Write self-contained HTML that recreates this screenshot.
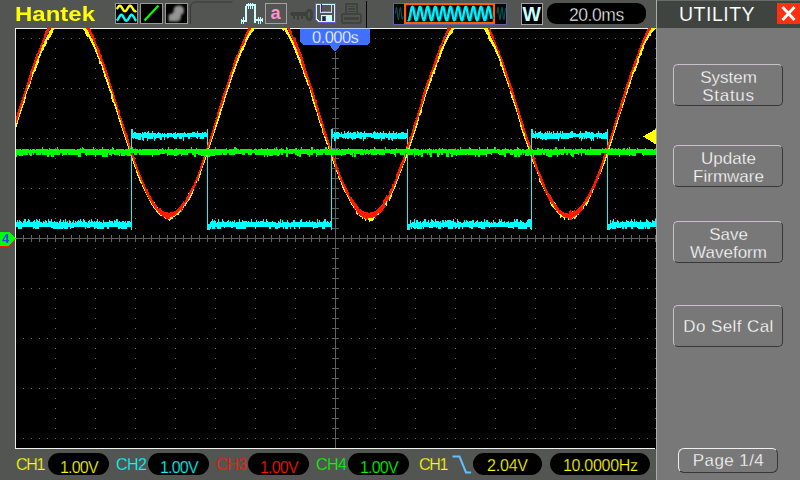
<!DOCTYPE html>
<html lang="en"><head><meta charset="utf-8"><title>Hantek UTILITY</title>
<style>
html,body{margin:0;padding:0;}
body{width:800px;height:480px;overflow:hidden;background:#535552;position:relative;font-family:"Liberation Sans",sans-serif;}
#scr{position:absolute;left:0;top:0;width:800px;height:480px;}
.t{position:absolute;white-space:nowrap;line-height:1;}
.ch{-webkit-text-stroke:0.25px #535552;}
.pv{-webkit-text-stroke:0.25px #000;}
.pill{position:absolute;background:#000;border-radius:11px;height:22px;top:453px;}
.btn{position:absolute;left:673px;width:108px;height:40px;border:1px solid;border-color:#c8c0c8 #383838 #383838 #c8c0c8;border-radius:5px;background:#787878;}
.bt{-webkit-text-stroke:0.3px #787878;position:absolute;left:657px;width:143px;text-align:center;color:#fff;font-size:17px;line-height:18px;white-space:nowrap;}
</style></head><body>
<svg id="scr" width="800" height="480" viewBox="0 0 800 480" shape-rendering="crispEdges">
<defs><filter id="bl" x="-20%" y="-20%" width="140%" height="140%"><feGaussianBlur stdDeviation="0.9"/></filter></defs>
<!-- side panel -->
<rect x="656" y="0" width="1" height="480" fill="#b0a8b0"/>
<rect x="657" y="0" width="143" height="480" fill="#787878"/>
<rect x="657" y="0" width="143" height="28" fill="#404440"/>
<rect x="657" y="0" width="143" height="1" fill="#686c68"/>
<!-- plot -->
<rect x="15" y="28" width="641" height="421" fill="#000"/>
<path d="M23 38h1v1h-1zM23 88h1v1h-1zM23 138h1v1h-1zM23 188h1v1h-1zM23 288h1v1h-1zM23 338h1v1h-1zM23 388h1v1h-1zM23 438h1v1h-1zM31 38h1v1h-1zM31 88h1v1h-1zM31 138h1v1h-1zM31 188h1v1h-1zM31 288h1v1h-1zM31 338h1v1h-1zM31 388h1v1h-1zM31 438h1v1h-1zM39 38h1v1h-1zM39 88h1v1h-1zM39 138h1v1h-1zM39 188h1v1h-1zM39 288h1v1h-1zM39 338h1v1h-1zM39 388h1v1h-1zM39 438h1v1h-1zM47 38h1v1h-1zM47 88h1v1h-1zM47 138h1v1h-1zM47 188h1v1h-1zM47 288h1v1h-1zM47 338h1v1h-1zM47 388h1v1h-1zM47 438h1v1h-1zM55 38h1v1h-1zM55 48h1v1h-1zM55 58h1v1h-1zM55 68h1v1h-1zM55 78h1v1h-1zM55 88h1v1h-1zM55 98h1v1h-1zM55 108h1v1h-1zM55 118h1v1h-1zM55 128h1v1h-1zM55 138h1v1h-1zM55 148h1v1h-1zM55 158h1v1h-1zM55 168h1v1h-1zM55 178h1v1h-1zM55 188h1v1h-1zM55 198h1v1h-1zM55 208h1v1h-1zM55 218h1v1h-1zM55 228h1v1h-1zM55 238h1v1h-1zM55 248h1v1h-1zM55 258h1v1h-1zM55 268h1v1h-1zM55 278h1v1h-1zM55 288h1v1h-1zM55 298h1v1h-1zM55 308h1v1h-1zM55 318h1v1h-1zM55 328h1v1h-1zM55 338h1v1h-1zM55 348h1v1h-1zM55 358h1v1h-1zM55 368h1v1h-1zM55 378h1v1h-1zM55 388h1v1h-1zM55 398h1v1h-1zM55 408h1v1h-1zM55 418h1v1h-1zM55 428h1v1h-1zM55 438h1v1h-1zM63 38h1v1h-1zM63 88h1v1h-1zM63 138h1v1h-1zM63 188h1v1h-1zM63 288h1v1h-1zM63 338h1v1h-1zM63 388h1v1h-1zM63 438h1v1h-1zM71 38h1v1h-1zM71 88h1v1h-1zM71 138h1v1h-1zM71 188h1v1h-1zM71 288h1v1h-1zM71 338h1v1h-1zM71 388h1v1h-1zM71 438h1v1h-1zM79 38h1v1h-1zM79 88h1v1h-1zM79 138h1v1h-1zM79 188h1v1h-1zM79 288h1v1h-1zM79 338h1v1h-1zM79 388h1v1h-1zM79 438h1v1h-1zM87 38h1v1h-1zM87 88h1v1h-1zM87 138h1v1h-1zM87 188h1v1h-1zM87 288h1v1h-1zM87 338h1v1h-1zM87 388h1v1h-1zM87 438h1v1h-1zM95 38h1v1h-1zM95 48h1v1h-1zM95 58h1v1h-1zM95 68h1v1h-1zM95 78h1v1h-1zM95 88h1v1h-1zM95 98h1v1h-1zM95 108h1v1h-1zM95 118h1v1h-1zM95 128h1v1h-1zM95 138h1v1h-1zM95 148h1v1h-1zM95 158h1v1h-1zM95 168h1v1h-1zM95 178h1v1h-1zM95 188h1v1h-1zM95 198h1v1h-1zM95 208h1v1h-1zM95 218h1v1h-1zM95 228h1v1h-1zM95 238h1v1h-1zM95 248h1v1h-1zM95 258h1v1h-1zM95 268h1v1h-1zM95 278h1v1h-1zM95 288h1v1h-1zM95 298h1v1h-1zM95 308h1v1h-1zM95 318h1v1h-1zM95 328h1v1h-1zM95 338h1v1h-1zM95 348h1v1h-1zM95 358h1v1h-1zM95 368h1v1h-1zM95 378h1v1h-1zM95 388h1v1h-1zM95 398h1v1h-1zM95 408h1v1h-1zM95 418h1v1h-1zM95 428h1v1h-1zM95 438h1v1h-1zM103 38h1v1h-1zM103 88h1v1h-1zM103 138h1v1h-1zM103 188h1v1h-1zM103 288h1v1h-1zM103 338h1v1h-1zM103 388h1v1h-1zM103 438h1v1h-1zM111 38h1v1h-1zM111 88h1v1h-1zM111 138h1v1h-1zM111 188h1v1h-1zM111 288h1v1h-1zM111 338h1v1h-1zM111 388h1v1h-1zM111 438h1v1h-1zM119 38h1v1h-1zM119 88h1v1h-1zM119 138h1v1h-1zM119 188h1v1h-1zM119 288h1v1h-1zM119 338h1v1h-1zM119 388h1v1h-1zM119 438h1v1h-1zM127 38h1v1h-1zM127 88h1v1h-1zM127 138h1v1h-1zM127 188h1v1h-1zM127 288h1v1h-1zM127 338h1v1h-1zM127 388h1v1h-1zM127 438h1v1h-1zM135 38h1v1h-1zM135 48h1v1h-1zM135 58h1v1h-1zM135 68h1v1h-1zM135 78h1v1h-1zM135 88h1v1h-1zM135 98h1v1h-1zM135 108h1v1h-1zM135 118h1v1h-1zM135 128h1v1h-1zM135 138h1v1h-1zM135 148h1v1h-1zM135 158h1v1h-1zM135 168h1v1h-1zM135 178h1v1h-1zM135 188h1v1h-1zM135 198h1v1h-1zM135 208h1v1h-1zM135 218h1v1h-1zM135 228h1v1h-1zM135 238h1v1h-1zM135 248h1v1h-1zM135 258h1v1h-1zM135 268h1v1h-1zM135 278h1v1h-1zM135 288h1v1h-1zM135 298h1v1h-1zM135 308h1v1h-1zM135 318h1v1h-1zM135 328h1v1h-1zM135 338h1v1h-1zM135 348h1v1h-1zM135 358h1v1h-1zM135 368h1v1h-1zM135 378h1v1h-1zM135 388h1v1h-1zM135 398h1v1h-1zM135 408h1v1h-1zM135 418h1v1h-1zM135 428h1v1h-1zM135 438h1v1h-1zM143 38h1v1h-1zM143 88h1v1h-1zM143 138h1v1h-1zM143 188h1v1h-1zM143 288h1v1h-1zM143 338h1v1h-1zM143 388h1v1h-1zM143 438h1v1h-1zM151 38h1v1h-1zM151 88h1v1h-1zM151 138h1v1h-1zM151 188h1v1h-1zM151 288h1v1h-1zM151 338h1v1h-1zM151 388h1v1h-1zM151 438h1v1h-1zM159 38h1v1h-1zM159 88h1v1h-1zM159 138h1v1h-1zM159 188h1v1h-1zM159 288h1v1h-1zM159 338h1v1h-1zM159 388h1v1h-1zM159 438h1v1h-1zM167 38h1v1h-1zM167 88h1v1h-1zM167 138h1v1h-1zM167 188h1v1h-1zM167 288h1v1h-1zM167 338h1v1h-1zM167 388h1v1h-1zM167 438h1v1h-1zM175 38h1v1h-1zM175 48h1v1h-1zM175 58h1v1h-1zM175 68h1v1h-1zM175 78h1v1h-1zM175 88h1v1h-1zM175 98h1v1h-1zM175 108h1v1h-1zM175 118h1v1h-1zM175 128h1v1h-1zM175 138h1v1h-1zM175 148h1v1h-1zM175 158h1v1h-1zM175 168h1v1h-1zM175 178h1v1h-1zM175 188h1v1h-1zM175 198h1v1h-1zM175 208h1v1h-1zM175 218h1v1h-1zM175 228h1v1h-1zM175 238h1v1h-1zM175 248h1v1h-1zM175 258h1v1h-1zM175 268h1v1h-1zM175 278h1v1h-1zM175 288h1v1h-1zM175 298h1v1h-1zM175 308h1v1h-1zM175 318h1v1h-1zM175 328h1v1h-1zM175 338h1v1h-1zM175 348h1v1h-1zM175 358h1v1h-1zM175 368h1v1h-1zM175 378h1v1h-1zM175 388h1v1h-1zM175 398h1v1h-1zM175 408h1v1h-1zM175 418h1v1h-1zM175 428h1v1h-1zM175 438h1v1h-1zM183 38h1v1h-1zM183 88h1v1h-1zM183 138h1v1h-1zM183 188h1v1h-1zM183 288h1v1h-1zM183 338h1v1h-1zM183 388h1v1h-1zM183 438h1v1h-1zM191 38h1v1h-1zM191 88h1v1h-1zM191 138h1v1h-1zM191 188h1v1h-1zM191 288h1v1h-1zM191 338h1v1h-1zM191 388h1v1h-1zM191 438h1v1h-1zM199 38h1v1h-1zM199 88h1v1h-1zM199 138h1v1h-1zM199 188h1v1h-1zM199 288h1v1h-1zM199 338h1v1h-1zM199 388h1v1h-1zM199 438h1v1h-1zM207 38h1v1h-1zM207 88h1v1h-1zM207 138h1v1h-1zM207 188h1v1h-1zM207 288h1v1h-1zM207 338h1v1h-1zM207 388h1v1h-1zM207 438h1v1h-1zM215 38h1v1h-1zM215 48h1v1h-1zM215 58h1v1h-1zM215 68h1v1h-1zM215 78h1v1h-1zM215 88h1v1h-1zM215 98h1v1h-1zM215 108h1v1h-1zM215 118h1v1h-1zM215 128h1v1h-1zM215 138h1v1h-1zM215 148h1v1h-1zM215 158h1v1h-1zM215 168h1v1h-1zM215 178h1v1h-1zM215 188h1v1h-1zM215 198h1v1h-1zM215 208h1v1h-1zM215 218h1v1h-1zM215 228h1v1h-1zM215 238h1v1h-1zM215 248h1v1h-1zM215 258h1v1h-1zM215 268h1v1h-1zM215 278h1v1h-1zM215 288h1v1h-1zM215 298h1v1h-1zM215 308h1v1h-1zM215 318h1v1h-1zM215 328h1v1h-1zM215 338h1v1h-1zM215 348h1v1h-1zM215 358h1v1h-1zM215 368h1v1h-1zM215 378h1v1h-1zM215 388h1v1h-1zM215 398h1v1h-1zM215 408h1v1h-1zM215 418h1v1h-1zM215 428h1v1h-1zM215 438h1v1h-1zM223 38h1v1h-1zM223 88h1v1h-1zM223 138h1v1h-1zM223 188h1v1h-1zM223 288h1v1h-1zM223 338h1v1h-1zM223 388h1v1h-1zM223 438h1v1h-1zM231 38h1v1h-1zM231 88h1v1h-1zM231 138h1v1h-1zM231 188h1v1h-1zM231 288h1v1h-1zM231 338h1v1h-1zM231 388h1v1h-1zM231 438h1v1h-1zM239 38h1v1h-1zM239 88h1v1h-1zM239 138h1v1h-1zM239 188h1v1h-1zM239 288h1v1h-1zM239 338h1v1h-1zM239 388h1v1h-1zM239 438h1v1h-1zM247 38h1v1h-1zM247 88h1v1h-1zM247 138h1v1h-1zM247 188h1v1h-1zM247 288h1v1h-1zM247 338h1v1h-1zM247 388h1v1h-1zM247 438h1v1h-1zM255 38h1v1h-1zM255 48h1v1h-1zM255 58h1v1h-1zM255 68h1v1h-1zM255 78h1v1h-1zM255 88h1v1h-1zM255 98h1v1h-1zM255 108h1v1h-1zM255 118h1v1h-1zM255 128h1v1h-1zM255 138h1v1h-1zM255 148h1v1h-1zM255 158h1v1h-1zM255 168h1v1h-1zM255 178h1v1h-1zM255 188h1v1h-1zM255 198h1v1h-1zM255 208h1v1h-1zM255 218h1v1h-1zM255 228h1v1h-1zM255 238h1v1h-1zM255 248h1v1h-1zM255 258h1v1h-1zM255 268h1v1h-1zM255 278h1v1h-1zM255 288h1v1h-1zM255 298h1v1h-1zM255 308h1v1h-1zM255 318h1v1h-1zM255 328h1v1h-1zM255 338h1v1h-1zM255 348h1v1h-1zM255 358h1v1h-1zM255 368h1v1h-1zM255 378h1v1h-1zM255 388h1v1h-1zM255 398h1v1h-1zM255 408h1v1h-1zM255 418h1v1h-1zM255 428h1v1h-1zM255 438h1v1h-1zM263 38h1v1h-1zM263 88h1v1h-1zM263 138h1v1h-1zM263 188h1v1h-1zM263 288h1v1h-1zM263 338h1v1h-1zM263 388h1v1h-1zM263 438h1v1h-1zM271 38h1v1h-1zM271 88h1v1h-1zM271 138h1v1h-1zM271 188h1v1h-1zM271 288h1v1h-1zM271 338h1v1h-1zM271 388h1v1h-1zM271 438h1v1h-1zM279 38h1v1h-1zM279 88h1v1h-1zM279 138h1v1h-1zM279 188h1v1h-1zM279 288h1v1h-1zM279 338h1v1h-1zM279 388h1v1h-1zM279 438h1v1h-1zM287 38h1v1h-1zM287 88h1v1h-1zM287 138h1v1h-1zM287 188h1v1h-1zM287 288h1v1h-1zM287 338h1v1h-1zM287 388h1v1h-1zM287 438h1v1h-1zM295 38h1v1h-1zM295 48h1v1h-1zM295 58h1v1h-1zM295 68h1v1h-1zM295 78h1v1h-1zM295 88h1v1h-1zM295 98h1v1h-1zM295 108h1v1h-1zM295 118h1v1h-1zM295 128h1v1h-1zM295 138h1v1h-1zM295 148h1v1h-1zM295 158h1v1h-1zM295 168h1v1h-1zM295 178h1v1h-1zM295 188h1v1h-1zM295 198h1v1h-1zM295 208h1v1h-1zM295 218h1v1h-1zM295 228h1v1h-1zM295 238h1v1h-1zM295 248h1v1h-1zM295 258h1v1h-1zM295 268h1v1h-1zM295 278h1v1h-1zM295 288h1v1h-1zM295 298h1v1h-1zM295 308h1v1h-1zM295 318h1v1h-1zM295 328h1v1h-1zM295 338h1v1h-1zM295 348h1v1h-1zM295 358h1v1h-1zM295 368h1v1h-1zM295 378h1v1h-1zM295 388h1v1h-1zM295 398h1v1h-1zM295 408h1v1h-1zM295 418h1v1h-1zM295 428h1v1h-1zM295 438h1v1h-1zM303 38h1v1h-1zM303 88h1v1h-1zM303 138h1v1h-1zM303 188h1v1h-1zM303 288h1v1h-1zM303 338h1v1h-1zM303 388h1v1h-1zM303 438h1v1h-1zM311 38h1v1h-1zM311 88h1v1h-1zM311 138h1v1h-1zM311 188h1v1h-1zM311 288h1v1h-1zM311 338h1v1h-1zM311 388h1v1h-1zM311 438h1v1h-1zM319 38h1v1h-1zM319 88h1v1h-1zM319 138h1v1h-1zM319 188h1v1h-1zM319 288h1v1h-1zM319 338h1v1h-1zM319 388h1v1h-1zM319 438h1v1h-1zM327 38h1v1h-1zM327 88h1v1h-1zM327 138h1v1h-1zM327 188h1v1h-1zM327 288h1v1h-1zM327 338h1v1h-1zM327 388h1v1h-1zM327 438h1v1h-1zM335 38h1v1h-1zM335 88h1v1h-1zM335 138h1v1h-1zM335 188h1v1h-1zM335 288h1v1h-1zM335 338h1v1h-1zM335 388h1v1h-1zM335 438h1v1h-1zM343 38h1v1h-1zM343 88h1v1h-1zM343 138h1v1h-1zM343 188h1v1h-1zM343 288h1v1h-1zM343 338h1v1h-1zM343 388h1v1h-1zM343 438h1v1h-1zM351 38h1v1h-1zM351 88h1v1h-1zM351 138h1v1h-1zM351 188h1v1h-1zM351 288h1v1h-1zM351 338h1v1h-1zM351 388h1v1h-1zM351 438h1v1h-1zM359 38h1v1h-1zM359 88h1v1h-1zM359 138h1v1h-1zM359 188h1v1h-1zM359 288h1v1h-1zM359 338h1v1h-1zM359 388h1v1h-1zM359 438h1v1h-1zM367 38h1v1h-1zM367 88h1v1h-1zM367 138h1v1h-1zM367 188h1v1h-1zM367 288h1v1h-1zM367 338h1v1h-1zM367 388h1v1h-1zM367 438h1v1h-1zM375 38h1v1h-1zM375 48h1v1h-1zM375 58h1v1h-1zM375 68h1v1h-1zM375 78h1v1h-1zM375 88h1v1h-1zM375 98h1v1h-1zM375 108h1v1h-1zM375 118h1v1h-1zM375 128h1v1h-1zM375 138h1v1h-1zM375 148h1v1h-1zM375 158h1v1h-1zM375 168h1v1h-1zM375 178h1v1h-1zM375 188h1v1h-1zM375 198h1v1h-1zM375 208h1v1h-1zM375 218h1v1h-1zM375 228h1v1h-1zM375 238h1v1h-1zM375 248h1v1h-1zM375 258h1v1h-1zM375 268h1v1h-1zM375 278h1v1h-1zM375 288h1v1h-1zM375 298h1v1h-1zM375 308h1v1h-1zM375 318h1v1h-1zM375 328h1v1h-1zM375 338h1v1h-1zM375 348h1v1h-1zM375 358h1v1h-1zM375 368h1v1h-1zM375 378h1v1h-1zM375 388h1v1h-1zM375 398h1v1h-1zM375 408h1v1h-1zM375 418h1v1h-1zM375 428h1v1h-1zM375 438h1v1h-1zM383 38h1v1h-1zM383 88h1v1h-1zM383 138h1v1h-1zM383 188h1v1h-1zM383 288h1v1h-1zM383 338h1v1h-1zM383 388h1v1h-1zM383 438h1v1h-1zM391 38h1v1h-1zM391 88h1v1h-1zM391 138h1v1h-1zM391 188h1v1h-1zM391 288h1v1h-1zM391 338h1v1h-1zM391 388h1v1h-1zM391 438h1v1h-1zM399 38h1v1h-1zM399 88h1v1h-1zM399 138h1v1h-1zM399 188h1v1h-1zM399 288h1v1h-1zM399 338h1v1h-1zM399 388h1v1h-1zM399 438h1v1h-1zM407 38h1v1h-1zM407 88h1v1h-1zM407 138h1v1h-1zM407 188h1v1h-1zM407 288h1v1h-1zM407 338h1v1h-1zM407 388h1v1h-1zM407 438h1v1h-1zM415 38h1v1h-1zM415 48h1v1h-1zM415 58h1v1h-1zM415 68h1v1h-1zM415 78h1v1h-1zM415 88h1v1h-1zM415 98h1v1h-1zM415 108h1v1h-1zM415 118h1v1h-1zM415 128h1v1h-1zM415 138h1v1h-1zM415 148h1v1h-1zM415 158h1v1h-1zM415 168h1v1h-1zM415 178h1v1h-1zM415 188h1v1h-1zM415 198h1v1h-1zM415 208h1v1h-1zM415 218h1v1h-1zM415 228h1v1h-1zM415 238h1v1h-1zM415 248h1v1h-1zM415 258h1v1h-1zM415 268h1v1h-1zM415 278h1v1h-1zM415 288h1v1h-1zM415 298h1v1h-1zM415 308h1v1h-1zM415 318h1v1h-1zM415 328h1v1h-1zM415 338h1v1h-1zM415 348h1v1h-1zM415 358h1v1h-1zM415 368h1v1h-1zM415 378h1v1h-1zM415 388h1v1h-1zM415 398h1v1h-1zM415 408h1v1h-1zM415 418h1v1h-1zM415 428h1v1h-1zM415 438h1v1h-1zM423 38h1v1h-1zM423 88h1v1h-1zM423 138h1v1h-1zM423 188h1v1h-1zM423 288h1v1h-1zM423 338h1v1h-1zM423 388h1v1h-1zM423 438h1v1h-1zM431 38h1v1h-1zM431 88h1v1h-1zM431 138h1v1h-1zM431 188h1v1h-1zM431 288h1v1h-1zM431 338h1v1h-1zM431 388h1v1h-1zM431 438h1v1h-1zM439 38h1v1h-1zM439 88h1v1h-1zM439 138h1v1h-1zM439 188h1v1h-1zM439 288h1v1h-1zM439 338h1v1h-1zM439 388h1v1h-1zM439 438h1v1h-1zM447 38h1v1h-1zM447 88h1v1h-1zM447 138h1v1h-1zM447 188h1v1h-1zM447 288h1v1h-1zM447 338h1v1h-1zM447 388h1v1h-1zM447 438h1v1h-1zM455 38h1v1h-1zM455 48h1v1h-1zM455 58h1v1h-1zM455 68h1v1h-1zM455 78h1v1h-1zM455 88h1v1h-1zM455 98h1v1h-1zM455 108h1v1h-1zM455 118h1v1h-1zM455 128h1v1h-1zM455 138h1v1h-1zM455 148h1v1h-1zM455 158h1v1h-1zM455 168h1v1h-1zM455 178h1v1h-1zM455 188h1v1h-1zM455 198h1v1h-1zM455 208h1v1h-1zM455 218h1v1h-1zM455 228h1v1h-1zM455 238h1v1h-1zM455 248h1v1h-1zM455 258h1v1h-1zM455 268h1v1h-1zM455 278h1v1h-1zM455 288h1v1h-1zM455 298h1v1h-1zM455 308h1v1h-1zM455 318h1v1h-1zM455 328h1v1h-1zM455 338h1v1h-1zM455 348h1v1h-1zM455 358h1v1h-1zM455 368h1v1h-1zM455 378h1v1h-1zM455 388h1v1h-1zM455 398h1v1h-1zM455 408h1v1h-1zM455 418h1v1h-1zM455 428h1v1h-1zM455 438h1v1h-1zM463 38h1v1h-1zM463 88h1v1h-1zM463 138h1v1h-1zM463 188h1v1h-1zM463 288h1v1h-1zM463 338h1v1h-1zM463 388h1v1h-1zM463 438h1v1h-1zM471 38h1v1h-1zM471 88h1v1h-1zM471 138h1v1h-1zM471 188h1v1h-1zM471 288h1v1h-1zM471 338h1v1h-1zM471 388h1v1h-1zM471 438h1v1h-1zM479 38h1v1h-1zM479 88h1v1h-1zM479 138h1v1h-1zM479 188h1v1h-1zM479 288h1v1h-1zM479 338h1v1h-1zM479 388h1v1h-1zM479 438h1v1h-1zM487 38h1v1h-1zM487 88h1v1h-1zM487 138h1v1h-1zM487 188h1v1h-1zM487 288h1v1h-1zM487 338h1v1h-1zM487 388h1v1h-1zM487 438h1v1h-1zM495 38h1v1h-1zM495 48h1v1h-1zM495 58h1v1h-1zM495 68h1v1h-1zM495 78h1v1h-1zM495 88h1v1h-1zM495 98h1v1h-1zM495 108h1v1h-1zM495 118h1v1h-1zM495 128h1v1h-1zM495 138h1v1h-1zM495 148h1v1h-1zM495 158h1v1h-1zM495 168h1v1h-1zM495 178h1v1h-1zM495 188h1v1h-1zM495 198h1v1h-1zM495 208h1v1h-1zM495 218h1v1h-1zM495 228h1v1h-1zM495 238h1v1h-1zM495 248h1v1h-1zM495 258h1v1h-1zM495 268h1v1h-1zM495 278h1v1h-1zM495 288h1v1h-1zM495 298h1v1h-1zM495 308h1v1h-1zM495 318h1v1h-1zM495 328h1v1h-1zM495 338h1v1h-1zM495 348h1v1h-1zM495 358h1v1h-1zM495 368h1v1h-1zM495 378h1v1h-1zM495 388h1v1h-1zM495 398h1v1h-1zM495 408h1v1h-1zM495 418h1v1h-1zM495 428h1v1h-1zM495 438h1v1h-1zM503 38h1v1h-1zM503 88h1v1h-1zM503 138h1v1h-1zM503 188h1v1h-1zM503 288h1v1h-1zM503 338h1v1h-1zM503 388h1v1h-1zM503 438h1v1h-1zM511 38h1v1h-1zM511 88h1v1h-1zM511 138h1v1h-1zM511 188h1v1h-1zM511 288h1v1h-1zM511 338h1v1h-1zM511 388h1v1h-1zM511 438h1v1h-1zM519 38h1v1h-1zM519 88h1v1h-1zM519 138h1v1h-1zM519 188h1v1h-1zM519 288h1v1h-1zM519 338h1v1h-1zM519 388h1v1h-1zM519 438h1v1h-1zM527 38h1v1h-1zM527 88h1v1h-1zM527 138h1v1h-1zM527 188h1v1h-1zM527 288h1v1h-1zM527 338h1v1h-1zM527 388h1v1h-1zM527 438h1v1h-1zM535 38h1v1h-1zM535 48h1v1h-1zM535 58h1v1h-1zM535 68h1v1h-1zM535 78h1v1h-1zM535 88h1v1h-1zM535 98h1v1h-1zM535 108h1v1h-1zM535 118h1v1h-1zM535 128h1v1h-1zM535 138h1v1h-1zM535 148h1v1h-1zM535 158h1v1h-1zM535 168h1v1h-1zM535 178h1v1h-1zM535 188h1v1h-1zM535 198h1v1h-1zM535 208h1v1h-1zM535 218h1v1h-1zM535 228h1v1h-1zM535 238h1v1h-1zM535 248h1v1h-1zM535 258h1v1h-1zM535 268h1v1h-1zM535 278h1v1h-1zM535 288h1v1h-1zM535 298h1v1h-1zM535 308h1v1h-1zM535 318h1v1h-1zM535 328h1v1h-1zM535 338h1v1h-1zM535 348h1v1h-1zM535 358h1v1h-1zM535 368h1v1h-1zM535 378h1v1h-1zM535 388h1v1h-1zM535 398h1v1h-1zM535 408h1v1h-1zM535 418h1v1h-1zM535 428h1v1h-1zM535 438h1v1h-1zM543 38h1v1h-1zM543 88h1v1h-1zM543 138h1v1h-1zM543 188h1v1h-1zM543 288h1v1h-1zM543 338h1v1h-1zM543 388h1v1h-1zM543 438h1v1h-1zM551 38h1v1h-1zM551 88h1v1h-1zM551 138h1v1h-1zM551 188h1v1h-1zM551 288h1v1h-1zM551 338h1v1h-1zM551 388h1v1h-1zM551 438h1v1h-1zM559 38h1v1h-1zM559 88h1v1h-1zM559 138h1v1h-1zM559 188h1v1h-1zM559 288h1v1h-1zM559 338h1v1h-1zM559 388h1v1h-1zM559 438h1v1h-1zM567 38h1v1h-1zM567 88h1v1h-1zM567 138h1v1h-1zM567 188h1v1h-1zM567 288h1v1h-1zM567 338h1v1h-1zM567 388h1v1h-1zM567 438h1v1h-1zM575 38h1v1h-1zM575 48h1v1h-1zM575 58h1v1h-1zM575 68h1v1h-1zM575 78h1v1h-1zM575 88h1v1h-1zM575 98h1v1h-1zM575 108h1v1h-1zM575 118h1v1h-1zM575 128h1v1h-1zM575 138h1v1h-1zM575 148h1v1h-1zM575 158h1v1h-1zM575 168h1v1h-1zM575 178h1v1h-1zM575 188h1v1h-1zM575 198h1v1h-1zM575 208h1v1h-1zM575 218h1v1h-1zM575 228h1v1h-1zM575 238h1v1h-1zM575 248h1v1h-1zM575 258h1v1h-1zM575 268h1v1h-1zM575 278h1v1h-1zM575 288h1v1h-1zM575 298h1v1h-1zM575 308h1v1h-1zM575 318h1v1h-1zM575 328h1v1h-1zM575 338h1v1h-1zM575 348h1v1h-1zM575 358h1v1h-1zM575 368h1v1h-1zM575 378h1v1h-1zM575 388h1v1h-1zM575 398h1v1h-1zM575 408h1v1h-1zM575 418h1v1h-1zM575 428h1v1h-1zM575 438h1v1h-1zM583 38h1v1h-1zM583 88h1v1h-1zM583 138h1v1h-1zM583 188h1v1h-1zM583 288h1v1h-1zM583 338h1v1h-1zM583 388h1v1h-1zM583 438h1v1h-1zM591 38h1v1h-1zM591 88h1v1h-1zM591 138h1v1h-1zM591 188h1v1h-1zM591 288h1v1h-1zM591 338h1v1h-1zM591 388h1v1h-1zM591 438h1v1h-1zM599 38h1v1h-1zM599 88h1v1h-1zM599 138h1v1h-1zM599 188h1v1h-1zM599 288h1v1h-1zM599 338h1v1h-1zM599 388h1v1h-1zM599 438h1v1h-1zM607 38h1v1h-1zM607 88h1v1h-1zM607 138h1v1h-1zM607 188h1v1h-1zM607 288h1v1h-1zM607 338h1v1h-1zM607 388h1v1h-1zM607 438h1v1h-1zM615 38h1v1h-1zM615 48h1v1h-1zM615 58h1v1h-1zM615 68h1v1h-1zM615 78h1v1h-1zM615 88h1v1h-1zM615 98h1v1h-1zM615 108h1v1h-1zM615 118h1v1h-1zM615 128h1v1h-1zM615 138h1v1h-1zM615 148h1v1h-1zM615 158h1v1h-1zM615 168h1v1h-1zM615 178h1v1h-1zM615 188h1v1h-1zM615 198h1v1h-1zM615 208h1v1h-1zM615 218h1v1h-1zM615 228h1v1h-1zM615 238h1v1h-1zM615 248h1v1h-1zM615 258h1v1h-1zM615 268h1v1h-1zM615 278h1v1h-1zM615 288h1v1h-1zM615 298h1v1h-1zM615 308h1v1h-1zM615 318h1v1h-1zM615 328h1v1h-1zM615 338h1v1h-1zM615 348h1v1h-1zM615 358h1v1h-1zM615 368h1v1h-1zM615 378h1v1h-1zM615 388h1v1h-1zM615 398h1v1h-1zM615 408h1v1h-1zM615 418h1v1h-1zM615 428h1v1h-1zM615 438h1v1h-1zM623 38h1v1h-1zM623 88h1v1h-1zM623 138h1v1h-1zM623 188h1v1h-1zM623 288h1v1h-1zM623 338h1v1h-1zM623 388h1v1h-1zM623 438h1v1h-1zM631 38h1v1h-1zM631 88h1v1h-1zM631 138h1v1h-1zM631 188h1v1h-1zM631 288h1v1h-1zM631 338h1v1h-1zM631 388h1v1h-1zM631 438h1v1h-1zM639 38h1v1h-1zM639 88h1v1h-1zM639 138h1v1h-1zM639 188h1v1h-1zM639 288h1v1h-1zM639 338h1v1h-1zM639 388h1v1h-1zM639 438h1v1h-1zM647 38h1v1h-1zM647 88h1v1h-1zM647 138h1v1h-1zM647 188h1v1h-1zM647 288h1v1h-1zM647 338h1v1h-1zM647 388h1v1h-1zM647 438h1v1h-1zM655 38h1v1h-1zM655 48h1v1h-1zM655 58h1v1h-1zM655 68h1v1h-1zM655 78h1v1h-1zM655 88h1v1h-1zM655 98h1v1h-1zM655 108h1v1h-1zM655 118h1v1h-1zM655 128h1v1h-1zM655 138h1v1h-1zM655 148h1v1h-1zM655 158h1v1h-1zM655 168h1v1h-1zM655 178h1v1h-1zM655 188h1v1h-1zM655 198h1v1h-1zM655 208h1v1h-1zM655 218h1v1h-1zM655 228h1v1h-1zM655 238h1v1h-1zM655 248h1v1h-1zM655 258h1v1h-1zM655 268h1v1h-1zM655 278h1v1h-1zM655 288h1v1h-1zM655 298h1v1h-1zM655 308h1v1h-1zM655 318h1v1h-1zM655 328h1v1h-1zM655 338h1v1h-1zM655 348h1v1h-1zM655 358h1v1h-1zM655 368h1v1h-1zM655 378h1v1h-1zM655 388h1v1h-1zM655 398h1v1h-1zM655 408h1v1h-1zM655 418h1v1h-1zM655 428h1v1h-1zM655 438h1v1h-1z" fill="#6c6c6c"/>
<path d="M16 238h640v1h-640zM23 235h1v7h-1zM31 235h1v7h-1zM39 235h1v7h-1zM47 235h1v7h-1zM55 235h1v7h-1zM63 235h1v7h-1zM71 235h1v7h-1zM79 235h1v7h-1zM87 235h1v7h-1zM95 235h1v7h-1zM103 235h1v7h-1zM111 235h1v7h-1zM119 235h1v7h-1zM127 235h1v7h-1zM135 235h1v7h-1zM143 235h1v7h-1zM151 235h1v7h-1zM159 235h1v7h-1zM167 235h1v7h-1zM175 235h1v7h-1zM183 235h1v7h-1zM191 235h1v7h-1zM199 235h1v7h-1zM207 235h1v7h-1zM215 235h1v7h-1zM223 235h1v7h-1zM231 235h1v7h-1zM239 235h1v7h-1zM247 235h1v7h-1zM255 235h1v7h-1zM263 235h1v7h-1zM271 235h1v7h-1zM279 235h1v7h-1zM287 235h1v7h-1zM295 235h1v7h-1zM303 235h1v7h-1zM311 235h1v7h-1zM319 235h1v7h-1zM327 235h1v7h-1zM335 235h1v7h-1zM343 235h1v7h-1zM351 235h1v7h-1zM359 235h1v7h-1zM367 235h1v7h-1zM375 235h1v7h-1zM383 235h1v7h-1zM391 235h1v7h-1zM399 235h1v7h-1zM407 235h1v7h-1zM415 235h1v7h-1zM423 235h1v7h-1zM431 235h1v7h-1zM439 235h1v7h-1zM447 235h1v7h-1zM455 235h1v7h-1zM463 235h1v7h-1zM471 235h1v7h-1zM479 235h1v7h-1zM487 235h1v7h-1zM495 235h1v7h-1zM503 235h1v7h-1zM511 235h1v7h-1zM519 235h1v7h-1zM527 235h1v7h-1zM535 235h1v7h-1zM543 235h1v7h-1zM551 235h1v7h-1zM559 235h1v7h-1zM567 235h1v7h-1zM575 235h1v7h-1zM583 235h1v7h-1zM591 235h1v7h-1zM599 235h1v7h-1zM607 235h1v7h-1zM615 235h1v7h-1zM623 235h1v7h-1zM631 235h1v7h-1zM639 235h1v7h-1zM647 235h1v7h-1zM655 235h1v7h-1zM335 52h1v396h-1zM332 58h7v1h-7zM332 68h7v1h-7zM332 78h7v1h-7zM332 88h7v1h-7zM332 98h7v1h-7zM332 108h7v1h-7zM332 118h7v1h-7zM332 128h7v1h-7zM332 138h7v1h-7zM332 148h7v1h-7zM332 158h7v1h-7zM332 168h7v1h-7zM332 178h7v1h-7zM332 188h7v1h-7zM332 198h7v1h-7zM332 208h7v1h-7zM332 218h7v1h-7zM332 228h7v1h-7zM332 238h7v1h-7zM332 248h7v1h-7zM332 258h7v1h-7zM332 268h7v1h-7zM332 278h7v1h-7zM332 288h7v1h-7zM332 298h7v1h-7zM332 308h7v1h-7zM332 318h7v1h-7zM332 328h7v1h-7zM332 338h7v1h-7zM332 348h7v1h-7zM332 358h7v1h-7zM332 368h7v1h-7zM332 378h7v1h-7zM332 388h7v1h-7zM332 398h7v1h-7zM332 408h7v1h-7zM332 418h7v1h-7zM332 428h7v1h-7zM332 438h7v1h-7z" fill="#606060"/>
<path d="M16 118h1v9h-1zM17 116h1v8h-1zM18 113h1v7h-1zM19 111h1v6h-1zM20 108h1v6h-1zM21 105h1v6h-1zM22 102h1v6h-1zM23 96h1v9h-1zM24 95h1v8h-1zM25 92h1v7h-1zM26 89h1v5h-1zM27 86h1v5h-1zM28 83h1v6h-1zM29 80h1v7h-1zM30 77h1v7h-1zM31 74h1v6h-1zM32 70h1v7h-1zM33 67h1v7h-1zM34 66h1v6h-1zM35 63h1v8h-1zM36 61h1v7h-1zM37 58h1v7h-1zM38 56h1v7h-1zM39 53h1v5h-1zM40 51h1v5h-1zM41 48h1v5h-1zM42 45h1v6h-1zM43 44h1v6h-1zM44 41h1v6h-1zM45 39h1v7h-1zM46 37h1v7h-1zM47 35h1v5h-1zM48 34h1v6h-1zM49 31h1v7h-1zM50 30h1v7h-1zM51 28h1v7h-1zM52 28h1v5h-1zM53 28h1v2h-1zM83 28h1v2h-1zM84 28h1v3h-1zM85 28h1v6h-1zM86 29h1v7h-1zM87 30h1v7h-1zM88 32h1v5h-1zM89 34h1v5h-1zM90 36h1v5h-1zM91 38h1v5h-1zM92 38h1v7h-1zM93 42h1v5h-1zM94 44h1v5h-1zM95 47h1v5h-1zM96 49h1v5h-1zM97 52h1v5h-1zM98 54h1v5h-1zM99 57h1v7h-1zM100 59h1v5h-1zM101 61h1v5h-1zM102 63h1v7h-1zM103 66h1v7h-1zM104 69h1v8h-1zM105 74h1v5h-1zM106 77h1v5h-1zM107 79h1v6h-1zM108 80h1v8h-1zM109 83h1v8h-1zM110 86h1v7h-1zM111 89h1v10h-1zM112 93h1v9h-1zM113 97h1v6h-1zM114 100h1v6h-1zM115 103h1v6h-1zM116 106h1v6h-1zM117 109h1v6h-1zM118 112h1v7h-1zM119 116h1v6h-1zM120 120h1v5h-1zM121 123h1v5h-1zM122 126h1v5h-1zM123 129h1v5h-1zM124 132h1v5h-1zM125 135h1v5h-1zM126 137h1v6h-1zM127 140h1v6h-1zM128 141h1v8h-1zM129 144h1v8h-1zM130 147h1v8h-1zM131 150h1v8h-1zM132 153h1v8h-1zM133 156h1v8h-1zM134 159h1v8h-1zM135 162h1v7h-1zM136 165h1v8h-1zM137 167h1v9h-1zM138 170h1v8h-1zM139 175h1v6h-1zM140 177h1v6h-1zM141 179h1v5h-1zM142 183h1v4h-1zM143 182h1v7h-1zM144 186h1v5h-1zM145 188h1v5h-1zM146 190h1v5h-1zM147 192h1v5h-1zM148 194h1v5h-1zM149 196h1v5h-1zM150 198h1v5h-1zM151 200h1v5h-1zM152 201h1v5h-1zM153 201h1v7h-1zM154 202h1v7h-1zM155 204h1v6h-1zM156 206h1v6h-1zM157 207h1v6h-1zM158 209h1v5h-1zM159 210h1v5h-1zM160 211h1v5h-1zM161 211h1v5h-1zM162 211h1v5h-1zM163 211h1v6h-1zM164 212h1v6h-1zM165 212h1v7h-1zM166 212h1v7h-1zM167 213h1v6h-1zM168 213h1v7h-1zM169 213h1v8h-1zM170 214h1v6h-1zM171 213h1v6h-1zM172 213h1v6h-1zM173 212h1v5h-1zM174 211h1v6h-1zM175 211h1v5h-1zM176 210h1v5h-1zM177 209h1v6h-1zM178 208h1v7h-1zM179 208h1v5h-1zM180 208h1v4h-1zM181 207h1v4h-1zM182 205h1v5h-1zM183 204h1v4h-1zM184 202h1v4h-1zM185 201h1v5h-1zM186 199h1v5h-1zM187 197h1v5h-1zM188 193h1v8h-1zM189 194h1v6h-1zM190 192h1v6h-1zM191 190h1v6h-1zM192 188h1v6h-1zM193 185h1v6h-1zM194 183h1v5h-1zM195 181h1v5h-1zM196 178h1v5h-1zM197 176h1v5h-1zM198 173h1v8h-1zM199 171h1v7h-1zM200 168h1v7h-1zM201 165h1v6h-1zM202 163h1v5h-1zM203 160h1v5h-1zM204 157h1v6h-1zM205 154h1v6h-1zM206 150h1v7h-1zM207 147h1v7h-1zM208 144h1v7h-1zM209 141h1v7h-1zM210 138h1v7h-1zM211 135h1v7h-1zM212 132h1v7h-1zM213 129h1v7h-1zM214 127h1v6h-1zM215 124h1v6h-1zM216 121h1v6h-1zM217 117h1v7h-1zM218 114h1v7h-1zM219 111h1v7h-1zM220 108h1v7h-1zM221 105h1v6h-1zM222 102h1v6h-1zM223 99h1v6h-1zM224 95h1v7h-1zM225 93h1v5h-1zM226 88h1v7h-1zM227 86h1v6h-1zM228 83h1v6h-1zM229 80h1v7h-1zM230 77h1v6h-1zM231 74h1v6h-1zM232 72h1v5h-1zM233 69h1v5h-1zM234 66h1v6h-1zM235 63h1v6h-1zM236 59h1v7h-1zM237 58h1v5h-1zM238 55h1v6h-1zM239 51h1v7h-1zM240 50h1v6h-1zM241 47h1v6h-1zM242 46h1v5h-1zM243 44h1v6h-1zM244 41h1v6h-1zM245 39h1v6h-1zM246 37h1v5h-1zM247 35h1v5h-1zM248 33h1v5h-1zM249 30h1v6h-1zM250 30h1v5h-1zM251 28h1v5h-1zM252 28h1v4h-1zM253 28h1v3h-1zM254 28h1v1h-1zM282 28h1v2h-1zM283 28h1v3h-1zM284 28h1v2h-1zM285 28h1v4h-1zM286 29h1v5h-1zM287 30h1v5h-1zM288 32h1v5h-1zM289 34h1v5h-1zM290 36h1v5h-1zM291 38h1v5h-1zM292 40h1v5h-1zM293 42h1v6h-1zM294 44h1v6h-1zM295 47h1v6h-1zM296 49h1v6h-1zM297 52h1v6h-1zM298 54h1v6h-1zM299 57h1v6h-1zM300 59h1v6h-1zM301 62h1v6h-1zM302 64h1v6h-1zM303 67h1v7h-1zM304 70h1v7h-1zM305 73h1v6h-1zM306 76h1v6h-1zM307 79h1v6h-1zM308 82h1v4h-1zM309 83h1v6h-1zM310 86h1v7h-1zM311 90h1v7h-1zM312 93h1v8h-1zM313 97h1v7h-1zM314 100h1v7h-1zM315 103h1v7h-1zM316 106h1v6h-1zM317 109h1v7h-1zM318 112h1v8h-1zM319 115h1v8h-1zM320 119h1v7h-1zM321 122h1v6h-1zM322 125h1v8h-1zM323 128h1v7h-1zM324 131h1v7h-1zM325 134h1v7h-1zM326 137h1v7h-1zM327 140h1v5h-1zM328 143h1v6h-1zM329 146h1v6h-1zM330 149h1v6h-1zM331 152h1v6h-1zM332 155h1v6h-1zM333 158h1v6h-1zM334 161h1v6h-1zM335 164h1v5h-1zM336 168h1v4h-1zM337 169h1v5h-1zM338 172h1v6h-1zM339 175h1v5h-1zM340 177h1v5h-1zM341 179h1v6h-1zM342 182h1v6h-1zM343 184h1v6h-1zM344 186h1v6h-1zM345 187h1v6h-1zM346 190h1v5h-1zM347 191h1v6h-1zM348 193h1v6h-1zM349 196h1v5h-1zM350 198h1v5h-1zM351 200h1v5h-1zM352 200h1v6h-1zM353 202h1v6h-1zM354 203h1v6h-1zM355 204h1v6h-1zM356 206h1v8h-1zM357 207h1v8h-1zM358 208h1v6h-1zM359 209h1v7h-1zM360 211h1v6h-1zM361 211h1v6h-1zM362 212h1v7h-1zM363 212h1v6h-1zM364 213h1v6h-1zM365 213h1v8h-1zM366 213h1v5h-1zM367 214h1v4h-1zM368 214h1v6h-1zM369 214h1v8h-1zM370 214h1v7h-1zM371 212h1v9h-1zM372 212h1v9h-1zM373 212h1v8h-1zM374 212h1v6h-1zM375 212h1v5h-1zM376 211h1v5h-1zM377 210h1v5h-1zM378 209h1v6h-1zM379 207h1v6h-1zM380 206h1v6h-1zM381 206h1v5h-1zM382 204h1v5h-1zM383 204h1v4h-1zM384 202h1v4h-1zM385 201h1v4h-1zM386 199h1v7h-1zM387 197h1v5h-1zM388 195h1v5h-1zM389 194h1v7h-1zM390 192h1v7h-1zM391 190h1v7h-1zM392 188h1v5h-1zM393 186h1v5h-1zM394 184h1v5h-1zM395 181h1v6h-1zM396 178h1v6h-1zM397 175h1v6h-1zM398 172h1v7h-1zM399 172h1v4h-1zM400 169h1v4h-1zM401 165h1v6h-1zM402 163h1v5h-1zM403 160h1v5h-1zM404 157h1v6h-1zM405 154h1v7h-1zM406 151h1v7h-1zM407 148h1v7h-1zM408 145h1v7h-1zM409 142h1v7h-1zM410 138h1v8h-1zM411 136h1v7h-1zM412 131h1v9h-1zM413 128h1v9h-1zM414 125h1v9h-1zM415 122h1v9h-1zM416 118h1v10h-1zM417 115h1v10h-1zM418 113h1v8h-1zM419 110h1v6h-1zM420 107h1v8h-1zM421 104h1v9h-1zM422 102h1v5h-1zM423 96h1v8h-1zM424 93h1v8h-1zM425 90h1v7h-1zM426 87h1v7h-1zM427 85h1v6h-1zM428 82h1v7h-1zM429 80h1v6h-1zM430 77h1v6h-1zM431 74h1v7h-1zM432 72h1v5h-1zM433 69h1v5h-1zM434 64h1v10h-1zM435 61h1v9h-1zM436 59h1v8h-1zM437 58h1v5h-1zM438 56h1v6h-1zM439 52h1v7h-1zM440 50h1v7h-1zM441 48h1v6h-1zM442 46h1v5h-1zM443 44h1v5h-1zM444 41h1v5h-1zM445 39h1v5h-1zM446 37h1v5h-1zM447 35h1v5h-1zM448 33h1v5h-1zM449 31h1v5h-1zM450 28h1v7h-1zM451 28h1v6h-1zM452 28h1v5h-1zM453 28h1v2h-1zM482 28h1v1h-1zM483 28h1v1h-1zM484 28h1v2h-1zM485 28h1v4h-1zM486 28h1v6h-1zM487 28h1v7h-1zM488 30h1v9h-1zM489 32h1v9h-1zM490 36h1v6h-1zM491 38h1v6h-1zM492 40h1v6h-1zM493 42h1v5h-1zM494 44h1v5h-1zM495 46h1v6h-1zM496 48h1v6h-1zM497 51h1v5h-1zM498 53h1v5h-1zM499 56h1v5h-1zM500 59h1v7h-1zM501 62h1v5h-1zM502 64h1v6h-1zM503 66h1v7h-1zM504 69h1v7h-1zM505 72h1v6h-1zM506 77h1v4h-1zM507 78h1v6h-1zM508 81h1v6h-1zM509 84h1v5h-1zM510 87h1v7h-1zM511 90h1v8h-1zM512 93h1v7h-1zM513 97h1v6h-1zM514 100h1v6h-1zM515 103h1v6h-1zM516 106h1v6h-1zM517 109h1v6h-1zM518 112h1v7h-1zM519 115h1v7h-1zM520 118h1v9h-1zM521 121h1v9h-1zM522 124h1v9h-1zM523 128h1v8h-1zM524 131h1v8h-1zM525 134h1v7h-1zM526 137h1v7h-1zM527 140h1v7h-1zM528 143h1v7h-1zM529 146h1v7h-1zM530 149h1v7h-1zM531 152h1v7h-1zM532 153h1v9h-1zM533 156h1v8h-1zM534 161h1v6h-1zM535 164h1v4h-1zM536 167h1v4h-1zM537 169h1v5h-1zM538 172h1v4h-1zM539 175h1v7h-1zM540 177h1v6h-1zM541 179h1v6h-1zM542 181h1v6h-1zM543 184h1v5h-1zM544 186h1v5h-1zM545 188h1v5h-1zM546 190h1v5h-1zM547 192h1v5h-1zM548 194h1v5h-1zM549 196h1v5h-1zM550 198h1v6h-1zM551 200h1v6h-1zM552 201h1v6h-1zM553 201h1v7h-1zM554 202h1v7h-1zM555 203h1v7h-1zM556 207h1v5h-1zM557 208h1v5h-1zM558 209h1v5h-1zM559 210h1v5h-1zM560 211h1v7h-1zM561 211h1v6h-1zM562 212h1v5h-1zM563 212h1v6h-1zM564 213h1v7h-1zM565 213h1v5h-1zM566 213h1v5h-1zM567 214h1v4h-1zM568 214h1v6h-1zM569 214h1v6h-1zM570 214h1v5h-1zM571 213h1v6h-1zM572 211h1v8h-1zM573 213h1v5h-1zM574 212h1v7h-1zM575 212h1v6h-1zM576 211h1v6h-1zM577 210h1v5h-1zM578 209h1v6h-1zM579 208h1v5h-1zM580 207h1v5h-1zM581 206h1v5h-1zM582 205h1v5h-1zM583 204h1v5h-1zM584 202h1v4h-1zM585 201h1v4h-1zM586 199h1v7h-1zM587 197h1v7h-1zM588 195h1v7h-1zM589 194h1v5h-1zM590 192h1v5h-1zM591 190h1v5h-1zM592 188h1v5h-1zM593 185h1v5h-1zM594 183h1v5h-1zM595 181h1v5h-1zM596 178h1v5h-1zM597 176h1v5h-1zM598 173h1v6h-1zM599 169h1v7h-1zM600 166h1v8h-1zM601 163h1v9h-1zM602 161h1v8h-1zM603 160h1v6h-1zM604 157h1v7h-1zM605 154h1v7h-1zM606 151h1v7h-1zM607 146h1v9h-1zM608 143h1v9h-1zM609 140h1v9h-1zM610 137h1v9h-1zM611 134h1v9h-1zM612 131h1v9h-1zM613 128h1v8h-1zM614 125h1v8h-1zM615 122h1v8h-1zM616 121h1v6h-1zM617 118h1v6h-1zM618 115h1v5h-1zM619 111h1v6h-1zM620 108h1v6h-1zM621 105h1v6h-1zM622 102h1v6h-1zM623 98h1v7h-1zM624 95h1v7h-1zM625 92h1v6h-1zM626 89h1v6h-1zM627 86h1v7h-1zM628 83h1v6h-1zM629 80h1v7h-1zM630 77h1v7h-1zM631 74h1v6h-1zM632 72h1v5h-1zM633 69h1v5h-1zM634 66h1v6h-1zM635 63h1v8h-1zM636 61h1v7h-1zM637 58h1v7h-1zM638 56h1v7h-1zM639 52h1v6h-1zM640 50h1v6h-1zM641 46h1v9h-1zM642 44h1v7h-1zM643 42h1v7h-1zM644 39h1v6h-1zM645 37h1v6h-1zM646 37h1v4h-1zM647 35h1v5h-1zM648 33h1v5h-1zM649 31h1v5h-1zM650 30h1v6h-1zM651 28h1v5h-1zM652 28h1v4h-1zM653 28h1v3h-1zM654 28h1v2h-1zM655 28h1v1h-1z" fill="#ffff00"/>
<path d="M16 222h1v5h-1zM17 220h1v7h-1zM18 222h1v7h-1zM19 220h1v9h-1zM20 221h1v8h-1zM21 222h1v7h-1zM22 223h1v4h-1zM23 221h1v6h-1zM24 219h1v8h-1zM25 219h1v8h-1zM26 222h1v5h-1zM27 221h1v6h-1zM28 219h1v8h-1zM29 220h1v7h-1zM30 222h1v5h-1zM31 222h1v5h-1zM32 222h1v5h-1zM33 221h1v8h-1zM34 220h1v8h-1zM35 222h1v7h-1zM36 219h1v10h-1zM37 220h1v9h-1zM38 221h1v8h-1zM39 219h1v8h-1zM40 222h1v5h-1zM41 222h1v5h-1zM42 223h1v4h-1zM43 221h1v6h-1zM44 222h1v5h-1zM45 220h1v7h-1zM46 221h1v6h-1zM47 223h1v4h-1zM48 219h1v8h-1zM49 221h1v6h-1zM50 221h1v6h-1zM51 219h1v9h-1zM52 222h1v6h-1zM53 222h1v7h-1zM54 221h1v8h-1zM55 222h1v7h-1zM56 222h1v7h-1zM57 222h1v7h-1zM58 223h1v6h-1zM59 221h1v8h-1zM60 219h1v10h-1zM61 222h1v7h-1zM62 222h1v7h-1zM63 220h1v8h-1zM64 222h1v7h-1zM65 219h1v10h-1zM66 222h1v7h-1zM67 221h1v8h-1zM68 223h1v4h-1zM69 220h1v7h-1zM70 221h1v8h-1zM71 223h1v5h-1zM72 222h1v6h-1zM73 220h1v8h-1zM74 223h1v4h-1zM75 221h1v6h-1zM76 222h1v5h-1zM77 221h1v6h-1zM78 220h1v7h-1zM79 221h1v6h-1zM80 219h1v8h-1zM81 221h1v6h-1zM82 222h1v5h-1zM83 219h1v8h-1zM84 220h1v7h-1zM85 222h1v7h-1zM86 222h1v5h-1zM87 223h1v5h-1zM88 221h1v7h-1zM89 220h1v8h-1zM90 222h1v5h-1zM91 219h1v8h-1zM92 221h1v6h-1zM93 222h1v5h-1zM94 221h1v8h-1zM95 222h1v6h-1zM96 221h1v7h-1zM97 219h1v10h-1zM98 222h1v7h-1zM99 221h1v8h-1zM100 222h1v7h-1zM101 222h1v7h-1zM102 223h1v6h-1zM103 220h1v9h-1zM104 222h1v5h-1zM105 222h1v5h-1zM106 222h1v5h-1zM107 222h1v7h-1zM108 222h1v7h-1zM109 220h1v7h-1zM110 221h1v6h-1zM111 221h1v6h-1zM112 221h1v6h-1zM113 223h1v4h-1zM114 220h1v7h-1zM115 221h1v6h-1zM116 219h1v8h-1zM117 219h1v8h-1zM118 222h1v7h-1zM119 221h1v8h-1zM120 222h1v6h-1zM121 222h1v7h-1zM122 221h1v8h-1zM123 221h1v8h-1zM124 222h1v7h-1zM125 221h1v8h-1zM126 223h1v6h-1zM127 221h1v6h-1zM128 221h1v6h-1zM129 221h1v6h-1zM130 222h1v5h-1zM131 129h1v101h-1zM132 129h1v9h-1zM133 133h1v6h-1zM134 132h1v6h-1zM135 132h1v7h-1zM136 133h1v6h-1zM137 133h1v6h-1zM138 133h1v7h-1zM139 133h1v7h-1zM140 133h1v7h-1zM141 134h1v3h-1zM142 132h1v8h-1zM143 133h1v8h-1zM144 132h1v6h-1zM145 132h1v6h-1zM146 133h1v5h-1zM147 132h1v9h-1zM148 131h1v8h-1zM149 133h1v6h-1zM150 133h1v6h-1zM151 133h1v6h-1zM152 131h1v8h-1zM153 133h1v4h-1zM154 133h1v8h-1zM155 133h1v6h-1zM156 134h1v4h-1zM157 133h1v5h-1zM158 132h1v6h-1zM159 133h1v5h-1zM160 133h1v7h-1zM161 134h1v6h-1zM162 133h1v4h-1zM163 134h1v3h-1zM164 133h1v7h-1zM165 134h1v3h-1zM166 134h1v3h-1zM167 133h1v5h-1zM168 133h1v5h-1zM169 133h1v4h-1zM170 133h1v4h-1zM171 133h1v4h-1zM172 134h1v3h-1zM173 133h1v5h-1zM174 133h1v6h-1zM175 132h1v7h-1zM176 134h1v5h-1zM177 133h1v4h-1zM178 133h1v4h-1zM179 133h1v6h-1zM180 133h1v6h-1zM181 133h1v6h-1zM182 133h1v4h-1zM183 133h1v8h-1zM184 132h1v5h-1zM185 133h1v4h-1zM186 134h1v3h-1zM187 133h1v4h-1zM188 133h1v6h-1zM189 133h1v6h-1zM190 133h1v4h-1zM191 133h1v4h-1zM192 132h1v5h-1zM193 132h1v5h-1zM194 132h1v5h-1zM195 133h1v4h-1zM196 133h1v5h-1zM197 131h1v8h-1zM198 133h1v4h-1zM199 133h1v4h-1zM200 133h1v6h-1zM201 133h1v6h-1zM202 132h1v7h-1zM203 133h1v6h-1zM204 132h1v5h-1zM205 132h1v5h-1zM206 133h1v4h-1zM207 129h1v101h-1zM208 224h1v6h-1zM209 224h1v6h-1zM210 222h1v7h-1zM211 221h1v6h-1zM212 219h1v10h-1zM213 221h1v8h-1zM214 220h1v9h-1zM215 221h1v6h-1zM216 223h1v4h-1zM217 222h1v7h-1zM218 219h1v10h-1zM219 222h1v7h-1zM220 222h1v7h-1zM221 222h1v5h-1zM222 219h1v8h-1zM223 221h1v6h-1zM224 222h1v6h-1zM225 222h1v5h-1zM226 222h1v5h-1zM227 221h1v6h-1zM228 220h1v7h-1zM229 222h1v5h-1zM230 221h1v6h-1zM231 222h1v6h-1zM232 221h1v7h-1zM233 222h1v5h-1zM234 220h1v7h-1zM235 223h1v4h-1zM236 222h1v7h-1zM237 222h1v7h-1zM238 222h1v7h-1zM239 219h1v10h-1zM240 222h1v7h-1zM241 222h1v7h-1zM242 220h1v9h-1zM243 221h1v8h-1zM244 221h1v8h-1zM245 221h1v8h-1zM246 221h1v6h-1zM247 222h1v5h-1zM248 221h1v6h-1zM249 222h1v5h-1zM250 222h1v5h-1zM251 219h1v8h-1zM252 222h1v5h-1zM253 222h1v5h-1zM254 222h1v5h-1zM255 222h1v7h-1zM256 220h1v7h-1zM257 222h1v5h-1zM258 221h1v6h-1zM259 222h1v5h-1zM260 221h1v6h-1zM261 221h1v6h-1zM262 221h1v6h-1zM263 219h1v8h-1zM264 222h1v5h-1zM265 222h1v5h-1zM266 219h1v8h-1zM267 221h1v6h-1zM268 222h1v5h-1zM269 222h1v7h-1zM270 222h1v7h-1zM271 222h1v5h-1zM272 221h1v6h-1zM273 222h1v5h-1zM274 222h1v5h-1zM275 222h1v7h-1zM276 223h1v6h-1zM277 223h1v6h-1zM278 221h1v7h-1zM279 222h1v6h-1zM280 219h1v8h-1zM281 223h1v4h-1zM282 220h1v7h-1zM283 222h1v7h-1zM284 222h1v5h-1zM285 222h1v7h-1zM286 222h1v7h-1zM287 220h1v9h-1zM288 222h1v5h-1zM289 223h1v4h-1zM290 223h1v6h-1zM291 222h1v5h-1zM292 222h1v5h-1zM293 220h1v7h-1zM294 220h1v9h-1zM295 222h1v5h-1zM296 222h1v5h-1zM297 222h1v5h-1zM298 222h1v5h-1zM299 222h1v7h-1zM300 220h1v7h-1zM301 219h1v8h-1zM302 222h1v5h-1zM303 222h1v5h-1zM304 222h1v5h-1zM305 222h1v5h-1zM306 221h1v6h-1zM307 222h1v5h-1zM308 222h1v5h-1zM309 220h1v7h-1zM310 222h1v5h-1zM311 222h1v5h-1zM312 221h1v6h-1zM313 222h1v7h-1zM314 222h1v6h-1zM315 222h1v6h-1zM316 223h1v5h-1zM317 219h1v9h-1zM318 222h1v5h-1zM319 220h1v7h-1zM320 222h1v5h-1zM321 222h1v5h-1zM322 222h1v7h-1zM323 221h1v8h-1zM324 219h1v10h-1zM325 219h1v8h-1zM326 222h1v5h-1zM327 221h1v6h-1zM328 222h1v5h-1zM329 223h1v4h-1zM330 221h1v6h-1zM331 129h1v101h-1zM332 129h1v9h-1zM333 134h1v3h-1zM334 132h1v9h-1zM335 133h1v8h-1zM336 132h1v6h-1zM337 132h1v7h-1zM338 132h1v7h-1zM339 133h1v4h-1zM340 134h1v3h-1zM341 132h1v5h-1zM342 134h1v4h-1zM343 134h1v4h-1zM344 131h1v7h-1zM345 133h1v6h-1zM346 133h1v5h-1zM347 132h1v7h-1zM348 131h1v8h-1zM349 133h1v5h-1zM350 132h1v6h-1zM351 133h1v6h-1zM352 133h1v7h-1zM353 132h1v7h-1zM354 132h1v7h-1zM355 132h1v7h-1zM356 134h1v4h-1zM357 131h1v7h-1zM358 132h1v6h-1zM359 133h1v5h-1zM360 132h1v7h-1zM361 132h1v7h-1zM362 133h1v4h-1zM363 133h1v8h-1zM364 131h1v8h-1zM365 133h1v6h-1zM366 133h1v4h-1zM367 133h1v4h-1zM368 133h1v4h-1zM369 133h1v4h-1zM370 133h1v4h-1zM371 133h1v5h-1zM372 134h1v4h-1zM373 132h1v6h-1zM374 131h1v8h-1zM375 132h1v7h-1zM376 133h1v6h-1zM377 132h1v7h-1zM378 133h1v6h-1zM379 133h1v6h-1zM380 132h1v6h-1zM381 133h1v8h-1zM382 133h1v6h-1zM383 131h1v8h-1zM384 133h1v6h-1zM385 133h1v4h-1zM386 133h1v5h-1zM387 134h1v4h-1zM388 133h1v7h-1zM389 131h1v9h-1zM390 133h1v5h-1zM391 133h1v7h-1zM392 133h1v8h-1zM393 131h1v8h-1zM394 133h1v6h-1zM395 133h1v6h-1zM396 132h1v7h-1zM397 134h1v4h-1zM398 133h1v6h-1zM399 133h1v6h-1zM400 133h1v6h-1zM401 132h1v7h-1zM402 132h1v7h-1zM403 132h1v7h-1zM404 133h1v6h-1zM405 133h1v6h-1zM406 133h1v5h-1zM407 129h1v101h-1zM408 224h1v6h-1zM409 224h1v6h-1zM410 220h1v7h-1zM411 223h1v6h-1zM412 222h1v5h-1zM413 222h1v6h-1zM414 219h1v10h-1zM415 223h1v6h-1zM416 220h1v8h-1zM417 220h1v9h-1zM418 222h1v7h-1zM419 222h1v7h-1zM420 221h1v8h-1zM421 223h1v6h-1zM422 222h1v5h-1zM423 221h1v8h-1zM424 219h1v8h-1zM425 219h1v8h-1zM426 222h1v5h-1zM427 222h1v5h-1zM428 220h1v7h-1zM429 223h1v5h-1zM430 222h1v6h-1zM431 219h1v9h-1zM432 220h1v8h-1zM433 221h1v6h-1zM434 222h1v5h-1zM435 219h1v8h-1zM436 221h1v7h-1zM437 221h1v6h-1zM438 221h1v8h-1zM439 222h1v7h-1zM440 221h1v8h-1zM441 223h1v4h-1zM442 220h1v7h-1zM443 220h1v8h-1zM444 222h1v5h-1zM445 220h1v7h-1zM446 221h1v6h-1zM447 220h1v7h-1zM448 220h1v9h-1zM449 220h1v9h-1zM450 220h1v9h-1zM451 221h1v8h-1zM452 221h1v8h-1zM453 219h1v8h-1zM454 222h1v5h-1zM455 222h1v7h-1zM456 223h1v5h-1zM457 219h1v8h-1zM458 221h1v8h-1zM459 222h1v7h-1zM460 222h1v5h-1zM461 223h1v4h-1zM462 223h1v6h-1zM463 222h1v5h-1zM464 220h1v7h-1zM465 222h1v5h-1zM466 220h1v7h-1zM467 221h1v6h-1zM468 222h1v5h-1zM469 221h1v7h-1zM470 221h1v7h-1zM471 221h1v8h-1zM472 220h1v9h-1zM473 220h1v7h-1zM474 223h1v4h-1zM475 222h1v5h-1zM476 221h1v6h-1zM477 220h1v7h-1zM478 222h1v6h-1zM479 222h1v6h-1zM480 222h1v6h-1zM481 221h1v8h-1zM482 222h1v7h-1zM483 222h1v7h-1zM484 219h1v10h-1zM485 222h1v5h-1zM486 220h1v7h-1zM487 220h1v7h-1zM488 222h1v5h-1zM489 222h1v6h-1zM490 223h1v4h-1zM491 222h1v5h-1zM492 223h1v4h-1zM493 220h1v7h-1zM494 222h1v5h-1zM495 222h1v5h-1zM496 223h1v4h-1zM497 223h1v4h-1zM498 222h1v5h-1zM499 219h1v8h-1zM500 221h1v6h-1zM501 219h1v8h-1zM502 222h1v5h-1zM503 222h1v5h-1zM504 221h1v6h-1zM505 223h1v4h-1zM506 222h1v5h-1zM507 222h1v5h-1zM508 221h1v7h-1zM509 223h1v5h-1zM510 222h1v6h-1zM511 222h1v6h-1zM512 222h1v6h-1zM513 222h1v7h-1zM514 219h1v8h-1zM515 221h1v6h-1zM516 219h1v8h-1zM517 219h1v8h-1zM518 222h1v7h-1zM519 222h1v7h-1zM520 220h1v9h-1zM521 221h1v8h-1zM522 222h1v7h-1zM523 222h1v7h-1zM524 223h1v6h-1zM525 223h1v6h-1zM526 222h1v7h-1zM527 220h1v7h-1zM528 219h1v8h-1zM529 219h1v8h-1zM530 219h1v10h-1zM531 129h1v101h-1zM532 129h1v9h-1zM533 133h1v5h-1zM534 134h1v4h-1zM535 131h1v8h-1zM536 133h1v4h-1zM537 133h1v6h-1zM538 132h1v6h-1zM539 132h1v6h-1zM540 131h1v8h-1zM541 133h1v6h-1zM542 133h1v7h-1zM543 134h1v5h-1zM544 133h1v6h-1zM545 132h1v8h-1zM546 133h1v7h-1zM547 131h1v8h-1zM548 133h1v6h-1zM549 131h1v8h-1zM550 133h1v6h-1zM551 132h1v7h-1zM552 134h1v5h-1zM553 131h1v8h-1zM554 133h1v6h-1zM555 133h1v6h-1zM556 133h1v6h-1zM557 131h1v8h-1zM558 133h1v8h-1zM559 133h1v5h-1zM560 131h1v6h-1zM561 134h1v5h-1zM562 131h1v8h-1zM563 133h1v6h-1zM564 133h1v6h-1zM565 133h1v6h-1zM566 133h1v6h-1zM567 133h1v6h-1zM568 133h1v6h-1zM569 133h1v5h-1zM570 132h1v6h-1zM571 131h1v7h-1zM572 131h1v7h-1zM573 133h1v4h-1zM574 133h1v4h-1zM575 133h1v4h-1zM576 134h1v3h-1zM577 134h1v3h-1zM578 134h1v3h-1zM579 133h1v6h-1zM580 131h1v7h-1zM581 133h1v8h-1zM582 133h1v6h-1zM583 133h1v4h-1zM584 133h1v6h-1zM585 131h1v7h-1zM586 131h1v8h-1zM587 132h1v6h-1zM588 132h1v6h-1zM589 132h1v6h-1zM590 133h1v6h-1zM591 132h1v9h-1zM592 132h1v7h-1zM593 133h1v8h-1zM594 134h1v3h-1zM595 134h1v3h-1zM596 133h1v4h-1zM597 133h1v6h-1zM598 131h1v6h-1zM599 133h1v5h-1zM600 133h1v5h-1zM601 133h1v6h-1zM602 134h1v5h-1zM603 133h1v6h-1zM604 133h1v6h-1zM605 132h1v7h-1zM606 132h1v7h-1zM607 129h1v101h-1zM608 224h1v6h-1zM609 224h1v6h-1zM610 220h1v9h-1zM611 223h1v5h-1zM612 221h1v8h-1zM613 219h1v10h-1zM614 222h1v7h-1zM615 222h1v7h-1zM616 222h1v5h-1zM617 220h1v8h-1zM618 221h1v7h-1zM619 223h1v5h-1zM620 222h1v6h-1zM621 222h1v5h-1zM622 221h1v8h-1zM623 222h1v7h-1zM624 222h1v5h-1zM625 222h1v7h-1zM626 220h1v9h-1zM627 221h1v6h-1zM628 221h1v6h-1zM629 222h1v5h-1zM630 221h1v6h-1zM631 219h1v10h-1zM632 221h1v8h-1zM633 222h1v5h-1zM634 219h1v8h-1zM635 222h1v5h-1zM636 221h1v6h-1zM637 222h1v6h-1zM638 222h1v7h-1zM639 222h1v7h-1zM640 220h1v9h-1zM641 222h1v7h-1zM642 222h1v7h-1zM643 222h1v7h-1zM644 222h1v5h-1zM645 222h1v7h-1zM646 219h1v8h-1zM647 220h1v9h-1zM648 221h1v8h-1zM649 222h1v7h-1zM650 222h1v5h-1zM651 223h1v4h-1zM652 220h1v7h-1zM653 221h1v6h-1zM654 221h1v6h-1zM655 219h1v8h-1z" fill="#00ffff"/>
<path d="M16 116h1v7h-1zM17 112h1v8h-1zM18 109h1v8h-1zM19 106h1v7h-1zM20 103h1v7h-1zM21 100h1v7h-1zM22 97h1v7h-1zM23 94h1v7h-1zM24 91h1v6h-1zM25 88h1v6h-1zM26 85h1v6h-1zM27 82h1v6h-1zM28 78h1v7h-1zM29 75h1v9h-1zM30 71h1v10h-1zM31 69h1v8h-1zM32 66h1v6h-1zM33 63h1v7h-1zM34 60h1v7h-1zM35 57h1v7h-1zM36 54h1v7h-1zM37 53h1v6h-1zM38 50h1v4h-1zM39 48h1v6h-1zM40 45h1v6h-1zM41 43h1v5h-1zM42 40h1v5h-1zM43 38h1v5h-1zM44 34h1v7h-1zM45 31h1v7h-1zM46 30h1v6h-1zM47 28h1v6h-1zM48 28h1v5h-1zM49 28h1v2h-1zM50 28h1v1h-1zM86 28h1v1h-1zM87 28h1v2h-1zM88 28h1v4h-1zM89 28h1v5h-1zM90 29h1v6h-1zM91 32h1v5h-1zM92 34h1v5h-1zM93 35h1v6h-1zM94 38h1v6h-1zM95 41h1v5h-1zM96 44h1v5h-1zM97 46h1v7h-1zM98 48h1v8h-1zM99 50h1v8h-1zM100 54h1v7h-1zM101 55h1v7h-1zM102 59h1v6h-1zM103 62h1v6h-1zM104 64h1v7h-1zM105 67h1v7h-1zM106 70h1v6h-1zM107 73h1v6h-1zM108 76h1v6h-1zM109 79h1v7h-1zM110 83h1v6h-1zM111 86h1v5h-1zM112 89h1v5h-1zM113 92h1v7h-1zM114 95h1v7h-1zM115 99h1v5h-1zM116 102h1v5h-1zM117 105h1v6h-1zM118 109h1v6h-1zM119 110h1v8h-1zM120 116h1v4h-1zM121 118h1v6h-1zM122 121h1v7h-1zM123 124h1v7h-1zM124 127h1v7h-1zM125 131h1v6h-1zM126 133h1v7h-1zM127 135h1v8h-1zM128 139h1v7h-1zM129 143h1v7h-1zM130 146h1v7h-1zM131 150h1v5h-1zM132 153h1v5h-1zM133 155h1v6h-1zM134 157h1v7h-1zM135 162h1v5h-1zM136 164h1v6h-1zM137 167h1v5h-1zM138 170h1v5h-1zM139 172h1v5h-1zM140 175h1v5h-1zM141 177h1v5h-1zM142 180h1v5h-1zM143 182h1v5h-1zM144 184h1v5h-1zM145 187h1v5h-1zM146 189h1v5h-1zM147 189h1v7h-1zM148 192h1v6h-1zM149 195h1v5h-1zM150 196h1v5h-1zM151 198h1v5h-1zM152 200h1v5h-1zM153 201h1v5h-1zM154 203h1v5h-1zM155 204h1v5h-1zM156 205h1v5h-1zM157 208h1v3h-1zM158 209h1v4h-1zM159 208h1v5h-1zM160 208h1v7h-1zM161 210h1v5h-1zM162 211h1v5h-1zM163 211h1v6h-1zM164 212h1v5h-1zM165 212h1v6h-1zM166 212h1v7h-1zM167 212h1v7h-1zM168 213h1v6h-1zM169 213h1v6h-1zM170 212h1v5h-1zM171 212h1v5h-1zM172 212h1v5h-1zM173 212h1v4h-1zM174 211h1v5h-1zM175 211h1v4h-1zM176 210h1v4h-1zM177 209h1v4h-1zM178 208h1v4h-1zM179 207h1v4h-1zM180 206h1v4h-1zM181 204h1v8h-1zM182 203h1v6h-1zM183 201h1v5h-1zM184 202h1v3h-1zM185 200h1v3h-1zM186 197h1v5h-1zM187 196h1v5h-1zM188 194h1v5h-1zM189 192h1v5h-1zM190 190h1v5h-1zM191 188h1v5h-1zM192 186h1v5h-1zM193 185h1v4h-1zM194 182h1v6h-1zM195 180h1v6h-1zM196 177h1v4h-1zM197 175h1v6h-1zM198 172h1v6h-1zM199 170h1v4h-1zM200 166h1v5h-1zM201 163h1v6h-1zM202 160h1v6h-1zM203 157h1v6h-1zM204 154h1v6h-1zM205 151h1v6h-1zM206 148h1v6h-1zM207 145h1v6h-1zM208 142h1v6h-1zM209 139h1v6h-1zM210 136h1v6h-1zM211 133h1v6h-1zM212 130h1v6h-1zM213 126h1v7h-1zM214 123h1v6h-1zM215 120h1v5h-1zM216 117h1v5h-1zM217 112h1v7h-1zM218 109h1v7h-1zM219 106h1v6h-1zM220 103h1v6h-1zM221 100h1v7h-1zM222 96h1v8h-1zM223 93h1v8h-1zM224 91h1v6h-1zM225 88h1v6h-1zM226 85h1v6h-1zM227 82h1v6h-1zM228 79h1v6h-1zM229 75h1v7h-1zM230 72h1v7h-1zM231 70h1v5h-1zM232 67h1v5h-1zM233 63h1v6h-1zM234 60h1v7h-1zM235 57h1v7h-1zM236 55h1v6h-1zM237 54h1v4h-1zM238 51h1v4h-1zM239 49h1v4h-1zM240 46h1v4h-1zM241 44h1v4h-1zM242 41h1v4h-1zM243 39h1v6h-1zM244 37h1v6h-1zM245 34h1v5h-1zM246 32h1v5h-1zM247 30h1v5h-1zM248 28h1v5h-1zM249 28h1v3h-1zM250 28h1v2h-1zM287 28h1v1h-1zM288 28h1v3h-1zM289 28h1v5h-1zM290 29h1v6h-1zM291 31h1v6h-1zM292 35h1v4h-1zM293 37h1v5h-1zM294 37h1v8h-1zM295 39h1v8h-1zM296 42h1v7h-1zM297 44h1v8h-1zM298 47h1v8h-1zM299 49h1v7h-1zM300 52h1v7h-1zM301 54h1v10h-1zM302 57h1v10h-1zM303 61h1v9h-1zM304 64h1v9h-1zM305 68h1v8h-1zM306 71h1v7h-1zM307 74h1v6h-1zM308 77h1v7h-1zM309 80h1v7h-1zM310 83h1v7h-1zM311 86h1v7h-1zM312 88h1v8h-1zM313 92h1v7h-1zM314 95h1v7h-1zM315 99h1v7h-1zM316 100h1v9h-1zM317 105h1v8h-1zM318 108h1v8h-1zM319 112h1v8h-1zM320 115h1v8h-1zM321 118h1v6h-1zM322 121h1v7h-1zM323 124h1v9h-1zM324 128h1v8h-1zM325 131h1v6h-1zM326 134h1v6h-1zM327 137h1v6h-1zM328 140h1v6h-1zM329 143h1v7h-1zM330 146h1v7h-1zM331 150h1v5h-1zM332 153h1v4h-1zM333 155h1v6h-1zM334 158h1v6h-1zM335 161h1v8h-1zM336 164h1v6h-1zM337 167h1v5h-1zM338 170h1v6h-1zM339 172h1v6h-1zM340 175h1v6h-1zM341 177h1v5h-1zM342 180h1v5h-1zM343 182h1v5h-1zM344 184h1v5h-1zM345 186h1v6h-1zM346 188h1v6h-1zM347 190h1v5h-1zM348 192h1v5h-1zM349 196h1v3h-1zM350 197h1v5h-1zM351 197h1v6h-1zM352 199h1v6h-1zM353 200h1v6h-1zM354 202h1v7h-1zM355 203h1v6h-1zM356 204h1v7h-1zM357 206h1v7h-1zM358 207h1v7h-1zM359 209h1v6h-1zM360 209h1v7h-1zM361 210h1v6h-1zM362 211h1v6h-1zM363 211h1v7h-1zM364 212h1v6h-1zM365 212h1v7h-1zM366 212h1v8h-1zM367 212h1v7h-1zM368 213h1v5h-1zM369 213h1v5h-1zM370 212h1v6h-1zM371 212h1v6h-1zM372 212h1v6h-1zM373 212h1v5h-1zM374 211h1v6h-1zM375 211h1v6h-1zM376 210h1v6h-1zM377 209h1v5h-1zM378 208h1v5h-1zM379 207h1v7h-1zM380 206h1v7h-1zM381 205h1v7h-1zM382 204h1v7h-1zM383 200h1v9h-1zM384 199h1v9h-1zM385 197h1v6h-1zM386 195h1v6h-1zM387 196h1v6h-1zM388 195h1v5h-1zM389 191h1v6h-1zM390 189h1v6h-1zM391 188h1v5h-1zM392 184h1v7h-1zM393 184h1v5h-1zM394 181h1v5h-1zM395 179h1v5h-1zM396 174h1v7h-1zM397 172h1v7h-1zM398 169h1v7h-1zM399 167h1v7h-1zM400 164h1v7h-1zM401 162h1v7h-1zM402 160h1v6h-1zM403 157h1v7h-1zM404 152h1v9h-1zM405 149h1v8h-1zM406 146h1v8h-1zM407 144h1v7h-1zM408 142h1v6h-1zM409 137h1v8h-1zM410 136h1v6h-1zM411 133h1v6h-1zM412 129h1v7h-1zM413 125h1v8h-1zM414 122h1v8h-1zM415 120h1v6h-1zM416 117h1v6h-1zM417 113h1v7h-1zM418 110h1v7h-1zM419 107h1v6h-1zM420 104h1v6h-1zM421 99h1v8h-1zM422 95h1v9h-1zM423 92h1v9h-1zM424 89h1v8h-1zM425 86h1v8h-1zM426 83h1v7h-1zM427 80h1v7h-1zM428 79h1v5h-1zM429 75h1v6h-1zM430 72h1v6h-1zM431 70h1v5h-1zM432 67h1v5h-1zM433 64h1v6h-1zM434 61h1v7h-1zM435 58h1v7h-1zM436 55h1v8h-1zM437 53h1v7h-1zM438 50h1v5h-1zM439 46h1v7h-1zM440 45h1v5h-1zM441 43h1v5h-1zM442 40h1v5h-1zM443 37h1v5h-1zM444 36h1v5h-1zM445 33h1v5h-1zM446 31h1v5h-1zM447 28h1v6h-1zM448 28h1v5h-1zM449 28h1v3h-1zM450 28h1v2h-1zM488 28h1v2h-1zM489 28h1v4h-1zM490 29h1v6h-1zM491 32h1v5h-1zM492 34h1v5h-1zM493 36h1v5h-1zM494 40h1v4h-1zM495 42h1v4h-1zM496 45h1v4h-1zM497 47h1v4h-1zM498 50h1v4h-1zM499 51h1v5h-1zM500 55h1v4h-1zM501 57h1v5h-1zM502 59h1v6h-1zM503 62h1v6h-1zM504 65h1v7h-1zM505 68h1v7h-1zM506 71h1v7h-1zM507 74h1v7h-1zM508 77h1v6h-1zM509 80h1v8h-1zM510 83h1v8h-1zM511 86h1v7h-1zM512 88h1v7h-1zM513 92h1v7h-1zM514 95h1v7h-1zM515 99h1v6h-1zM516 102h1v6h-1zM517 105h1v8h-1zM518 108h1v7h-1zM519 111h1v8h-1zM520 115h1v7h-1zM521 118h1v7h-1zM522 121h1v8h-1zM523 124h1v8h-1zM524 128h1v5h-1zM525 131h1v7h-1zM526 134h1v7h-1zM527 137h1v6h-1zM528 140h1v6h-1zM529 142h1v8h-1zM530 145h1v8h-1zM531 149h1v6h-1zM532 152h1v7h-1zM533 154h1v8h-1zM534 157h1v8h-1zM535 161h1v7h-1zM536 164h1v7h-1zM537 167h1v5h-1zM538 170h1v5h-1zM539 172h1v6h-1zM540 174h1v7h-1zM541 176h1v7h-1zM542 179h1v7h-1zM543 182h1v6h-1zM544 184h1v6h-1zM545 187h1v6h-1zM546 189h1v5h-1zM547 191h1v6h-1zM548 193h1v6h-1zM549 194h1v7h-1zM550 195h1v7h-1zM551 197h1v7h-1zM552 199h1v5h-1zM553 201h1v5h-1zM554 203h1v5h-1zM555 204h1v5h-1zM556 205h1v6h-1zM557 207h1v4h-1zM558 208h1v5h-1zM559 210h1v4h-1zM560 210h1v4h-1zM561 211h1v4h-1zM562 212h1v4h-1zM563 212h1v5h-1zM564 213h1v4h-1zM565 213h1v5h-1zM566 213h1v5h-1zM567 213h1v5h-1zM568 214h1v4h-1zM569 211h1v9h-1zM570 210h1v10h-1zM571 212h1v8h-1zM572 212h1v6h-1zM573 211h1v6h-1zM574 210h1v7h-1zM575 211h1v5h-1zM576 210h1v5h-1zM577 209h1v6h-1zM578 208h1v6h-1zM579 207h1v6h-1zM580 206h1v6h-1zM581 205h1v6h-1zM582 204h1v6h-1zM583 202h1v4h-1zM584 201h1v4h-1zM585 199h1v4h-1zM586 197h1v5h-1zM587 196h1v5h-1zM588 194h1v5h-1zM589 192h1v5h-1zM590 190h1v5h-1zM591 188h1v7h-1zM592 186h1v4h-1zM593 184h1v5h-1zM594 181h1v7h-1zM595 179h1v7h-1zM596 176h1v7h-1zM597 174h1v7h-1zM598 171h1v7h-1zM599 169h1v7h-1zM600 166h1v7h-1zM601 163h1v6h-1zM602 160h1v6h-1zM603 156h1v7h-1zM604 152h1v8h-1zM605 151h1v6h-1zM606 148h1v6h-1zM607 145h1v6h-1zM608 142h1v6h-1zM609 139h1v6h-1zM610 136h1v6h-1zM611 133h1v6h-1zM612 130h1v6h-1zM613 126h1v7h-1zM614 123h1v7h-1zM615 120h1v6h-1zM616 117h1v6h-1zM617 113h1v7h-1zM618 110h1v7h-1zM619 107h1v8h-1zM620 103h1v9h-1zM621 100h1v9h-1zM622 97h1v7h-1zM623 94h1v8h-1zM624 91h1v8h-1zM625 87h1v9h-1zM626 84h1v8h-1zM627 82h1v6h-1zM628 79h1v6h-1zM629 75h1v7h-1zM630 72h1v8h-1zM631 70h1v6h-1zM632 67h1v5h-1zM633 64h1v6h-1zM634 61h1v6h-1zM635 59h1v7h-1zM636 56h1v7h-1zM637 54h1v4h-1zM638 50h1v5h-1zM639 48h1v5h-1zM640 45h1v5h-1zM641 43h1v5h-1zM642 40h1v5h-1zM643 38h1v5h-1zM644 36h1v5h-1zM645 33h1v6h-1zM646 31h1v6h-1zM647 29h1v6h-1zM648 28h1v5h-1zM649 28h1v3h-1zM650 28h1v2h-1z" fill="#ff1800"/>
<path d="M16 149h1v8h-1zM17 149h1v6h-1zM18 149h1v6h-1zM19 149h1v7h-1zM20 149h1v7h-1zM21 150h1v6h-1zM22 149h1v7h-1zM23 149h1v6h-1zM24 149h1v6h-1zM25 149h1v6h-1zM26 149h1v6h-1zM27 149h1v6h-1zM28 149h1v4h-1zM29 150h1v5h-1zM30 149h1v7h-1zM31 150h1v6h-1zM32 149h1v4h-1zM33 149h1v6h-1zM34 149h1v4h-1zM35 150h1v3h-1zM36 149h1v6h-1zM37 149h1v6h-1zM38 149h1v6h-1zM39 149h1v6h-1zM40 149h1v6h-1zM41 149h1v4h-1zM42 147h1v8h-1zM43 149h1v6h-1zM44 149h1v6h-1zM45 149h1v6h-1zM46 149h1v6h-1zM47 149h1v8h-1zM48 150h1v7h-1zM49 148h1v7h-1zM50 149h1v6h-1zM51 149h1v8h-1zM52 149h1v8h-1zM53 149h1v8h-1zM54 149h1v6h-1zM55 149h1v6h-1zM56 149h1v6h-1zM57 147h1v8h-1zM58 149h1v6h-1zM59 150h1v5h-1zM60 149h1v4h-1zM61 149h1v4h-1zM62 149h1v7h-1zM63 149h1v6h-1zM64 149h1v6h-1zM65 149h1v6h-1zM66 149h1v6h-1zM67 149h1v4h-1zM68 149h1v6h-1zM69 149h1v6h-1zM70 149h1v6h-1zM71 149h1v6h-1zM72 149h1v6h-1zM73 149h1v6h-1zM74 149h1v6h-1zM75 150h1v5h-1zM76 150h1v5h-1zM77 149h1v6h-1zM78 149h1v8h-1zM79 149h1v8h-1zM80 148h1v9h-1zM81 149h1v4h-1zM82 147h1v6h-1zM83 148h1v5h-1zM84 149h1v4h-1zM85 149h1v6h-1zM86 149h1v7h-1zM87 149h1v6h-1zM88 149h1v6h-1zM89 149h1v6h-1zM90 149h1v6h-1zM91 149h1v6h-1zM92 149h1v6h-1zM93 147h1v8h-1zM94 149h1v6h-1zM95 150h1v7h-1zM96 149h1v6h-1zM97 149h1v6h-1zM98 150h1v5h-1zM99 149h1v6h-1zM100 149h1v6h-1zM101 149h1v6h-1zM102 147h1v10h-1zM103 149h1v8h-1zM104 149h1v8h-1zM105 149h1v8h-1zM106 149h1v8h-1zM107 149h1v8h-1zM108 149h1v4h-1zM109 150h1v5h-1zM110 149h1v6h-1zM111 149h1v7h-1zM112 147h1v7h-1zM113 148h1v6h-1zM114 150h1v5h-1zM115 150h1v5h-1zM116 149h1v6h-1zM117 149h1v6h-1zM118 149h1v6h-1zM119 149h1v7h-1zM120 149h1v4h-1zM121 149h1v7h-1zM122 149h1v7h-1zM123 149h1v7h-1zM124 150h1v6h-1zM125 149h1v6h-1zM126 149h1v6h-1zM127 149h1v7h-1zM128 149h1v7h-1zM129 149h1v7h-1zM130 148h1v8h-1zM131 149h1v4h-1zM132 147h1v6h-1zM133 149h1v4h-1zM134 149h1v6h-1zM135 149h1v6h-1zM136 149h1v6h-1zM137 149h1v4h-1zM138 150h1v3h-1zM139 149h1v6h-1zM140 149h1v6h-1zM141 150h1v5h-1zM142 149h1v6h-1zM143 149h1v6h-1zM144 149h1v6h-1zM145 149h1v6h-1zM146 149h1v6h-1zM147 149h1v6h-1zM148 149h1v6h-1zM149 149h1v6h-1zM150 149h1v6h-1zM151 149h1v6h-1zM152 149h1v8h-1zM153 149h1v6h-1zM154 149h1v6h-1zM155 149h1v6h-1zM156 149h1v6h-1zM157 149h1v6h-1zM158 150h1v5h-1zM159 149h1v6h-1zM160 149h1v5h-1zM161 149h1v5h-1zM162 148h1v6h-1zM163 149h1v5h-1zM164 150h1v4h-1zM165 149h1v4h-1zM166 150h1v3h-1zM167 149h1v7h-1zM168 147h1v8h-1zM169 149h1v6h-1zM170 149h1v6h-1zM171 149h1v6h-1zM172 149h1v6h-1zM173 150h1v5h-1zM174 149h1v7h-1zM175 149h1v7h-1zM176 148h1v8h-1zM177 149h1v6h-1zM178 149h1v6h-1zM179 149h1v5h-1zM180 149h1v5h-1zM181 149h1v7h-1zM182 149h1v6h-1zM183 149h1v6h-1zM184 149h1v6h-1zM185 150h1v5h-1zM186 149h1v6h-1zM187 149h1v6h-1zM188 149h1v4h-1zM189 149h1v4h-1zM190 149h1v4h-1zM191 147h1v6h-1zM192 149h1v6h-1zM193 149h1v6h-1zM194 149h1v8h-1zM195 149h1v8h-1zM196 148h1v6h-1zM197 149h1v5h-1zM198 149h1v6h-1zM199 149h1v6h-1zM200 149h1v6h-1zM201 149h1v7h-1zM202 149h1v7h-1zM203 149h1v7h-1zM204 149h1v8h-1zM205 149h1v7h-1zM206 149h1v6h-1zM207 148h1v7h-1zM208 149h1v8h-1zM209 149h1v8h-1zM210 149h1v7h-1zM211 149h1v7h-1zM212 149h1v7h-1zM213 149h1v7h-1zM214 149h1v7h-1zM215 147h1v8h-1zM216 149h1v6h-1zM217 149h1v6h-1zM218 149h1v6h-1zM219 149h1v6h-1zM220 149h1v6h-1zM221 149h1v6h-1zM222 149h1v4h-1zM223 149h1v6h-1zM224 149h1v6h-1zM225 149h1v6h-1zM226 148h1v7h-1zM227 150h1v3h-1zM228 150h1v3h-1zM229 149h1v6h-1zM230 149h1v6h-1zM231 149h1v6h-1zM232 149h1v6h-1zM233 149h1v6h-1zM234 147h1v8h-1zM235 147h1v7h-1zM236 148h1v6h-1zM237 149h1v5h-1zM238 149h1v5h-1zM239 150h1v4h-1zM240 149h1v5h-1zM241 149h1v5h-1zM242 149h1v6h-1zM243 149h1v6h-1zM244 149h1v6h-1zM245 149h1v4h-1zM246 149h1v4h-1zM247 149h1v4h-1zM248 149h1v6h-1zM249 149h1v6h-1zM250 149h1v6h-1zM251 149h1v6h-1zM252 150h1v3h-1zM253 150h1v3h-1zM254 149h1v4h-1zM255 149h1v6h-1zM256 149h1v6h-1zM257 150h1v5h-1zM258 149h1v6h-1zM259 149h1v6h-1zM260 149h1v6h-1zM261 148h1v7h-1zM262 149h1v6h-1zM263 149h1v6h-1zM264 149h1v8h-1zM265 149h1v6h-1zM266 149h1v6h-1zM267 148h1v9h-1zM268 149h1v6h-1zM269 149h1v7h-1zM270 149h1v7h-1zM271 149h1v7h-1zM272 149h1v7h-1zM273 149h1v6h-1zM274 148h1v7h-1zM275 149h1v6h-1zM276 147h1v8h-1zM277 149h1v7h-1zM278 150h1v6h-1zM279 149h1v6h-1zM280 149h1v4h-1zM281 148h1v7h-1zM282 149h1v6h-1zM283 149h1v4h-1zM284 150h1v3h-1zM285 150h1v3h-1zM286 147h1v10h-1zM287 148h1v9h-1zM288 150h1v3h-1zM289 149h1v5h-1zM290 149h1v5h-1zM291 149h1v5h-1zM292 149h1v5h-1zM293 149h1v4h-1zM294 149h1v4h-1zM295 148h1v7h-1zM296 148h1v7h-1zM297 150h1v6h-1zM298 149h1v7h-1zM299 150h1v7h-1zM300 149h1v8h-1zM301 147h1v7h-1zM302 149h1v5h-1zM303 149h1v5h-1zM304 149h1v5h-1zM305 149h1v5h-1zM306 149h1v5h-1zM307 149h1v6h-1zM308 149h1v6h-1zM309 149h1v8h-1zM310 150h1v5h-1zM311 147h1v8h-1zM312 147h1v8h-1zM313 150h1v3h-1zM314 149h1v4h-1zM315 150h1v3h-1zM316 149h1v8h-1zM317 149h1v6h-1zM318 149h1v6h-1zM319 150h1v5h-1zM320 149h1v6h-1zM321 149h1v6h-1zM322 149h1v6h-1zM323 149h1v4h-1zM324 149h1v4h-1zM325 147h1v8h-1zM326 147h1v8h-1zM327 149h1v6h-1zM328 150h1v5h-1zM329 149h1v6h-1zM330 149h1v6h-1zM331 149h1v6h-1zM332 149h1v6h-1zM333 149h1v6h-1zM334 149h1v6h-1zM335 150h1v5h-1zM336 149h1v6h-1zM337 149h1v6h-1zM338 150h1v5h-1zM339 149h1v6h-1zM340 150h1v5h-1zM341 149h1v7h-1zM342 149h1v6h-1zM343 149h1v6h-1zM344 149h1v6h-1zM345 149h1v6h-1zM346 149h1v5h-1zM347 149h1v5h-1zM348 148h1v6h-1zM349 149h1v5h-1zM350 149h1v6h-1zM351 149h1v6h-1zM352 149h1v8h-1zM353 149h1v4h-1zM354 149h1v8h-1zM355 149h1v8h-1zM356 149h1v5h-1zM357 149h1v5h-1zM358 149h1v5h-1zM359 149h1v5h-1zM360 149h1v6h-1zM361 149h1v6h-1zM362 149h1v6h-1zM363 150h1v5h-1zM364 149h1v4h-1zM365 150h1v5h-1zM366 149h1v5h-1zM367 149h1v5h-1zM368 150h1v5h-1zM369 150h1v4h-1zM370 149h1v4h-1zM371 149h1v6h-1zM372 149h1v6h-1zM373 149h1v6h-1zM374 147h1v8h-1zM375 149h1v6h-1zM376 149h1v6h-1zM377 149h1v5h-1zM378 149h1v5h-1zM379 149h1v6h-1zM380 149h1v6h-1zM381 149h1v6h-1zM382 149h1v6h-1zM383 149h1v6h-1zM384 150h1v5h-1zM385 147h1v6h-1zM386 149h1v4h-1zM387 149h1v4h-1zM388 149h1v4h-1zM389 149h1v4h-1zM390 150h1v4h-1zM391 149h1v5h-1zM392 149h1v5h-1zM393 149h1v5h-1zM394 149h1v6h-1zM395 149h1v8h-1zM396 148h1v5h-1zM397 149h1v4h-1zM398 149h1v4h-1zM399 149h1v4h-1zM400 149h1v6h-1zM401 149h1v6h-1zM402 149h1v6h-1zM403 149h1v6h-1zM404 149h1v8h-1zM405 149h1v4h-1zM406 147h1v6h-1zM407 147h1v8h-1zM408 149h1v6h-1zM409 149h1v6h-1zM410 149h1v6h-1zM411 149h1v6h-1zM412 149h1v6h-1zM413 149h1v4h-1zM414 148h1v9h-1zM415 149h1v6h-1zM416 149h1v6h-1zM417 149h1v6h-1zM418 149h1v7h-1zM419 150h1v5h-1zM420 150h1v5h-1zM421 149h1v8h-1zM422 150h1v7h-1zM423 149h1v4h-1zM424 150h1v3h-1zM425 149h1v4h-1zM426 150h1v3h-1zM427 149h1v6h-1zM428 149h1v4h-1zM429 148h1v7h-1zM430 149h1v8h-1zM431 149h1v8h-1zM432 150h1v3h-1zM433 149h1v4h-1zM434 150h1v3h-1zM435 149h1v4h-1zM436 149h1v4h-1zM437 150h1v7h-1zM438 149h1v8h-1zM439 148h1v7h-1zM440 149h1v4h-1zM441 149h1v6h-1zM442 148h1v7h-1zM443 149h1v4h-1zM444 149h1v4h-1zM445 149h1v4h-1zM446 149h1v8h-1zM447 150h1v7h-1zM448 149h1v8h-1zM449 149h1v4h-1zM450 149h1v5h-1zM451 149h1v8h-1zM452 149h1v8h-1zM453 149h1v6h-1zM454 149h1v6h-1zM455 149h1v6h-1zM456 150h1v6h-1zM457 149h1v6h-1zM458 149h1v6h-1zM459 150h1v5h-1zM460 147h1v8h-1zM461 149h1v6h-1zM462 149h1v6h-1zM463 149h1v6h-1zM464 149h1v6h-1zM465 149h1v6h-1zM466 149h1v6h-1zM467 149h1v5h-1zM468 149h1v6h-1zM469 147h1v8h-1zM470 148h1v7h-1zM471 149h1v6h-1zM472 149h1v6h-1zM473 149h1v6h-1zM474 149h1v6h-1zM475 149h1v8h-1zM476 149h1v6h-1zM477 149h1v6h-1zM478 150h1v7h-1zM479 147h1v10h-1zM480 149h1v6h-1zM481 149h1v6h-1zM482 149h1v6h-1zM483 149h1v6h-1zM484 149h1v6h-1zM485 149h1v6h-1zM486 149h1v8h-1zM487 147h1v7h-1zM488 149h1v5h-1zM489 149h1v5h-1zM490 149h1v5h-1zM491 149h1v6h-1zM492 149h1v4h-1zM493 149h1v4h-1zM494 147h1v6h-1zM495 147h1v6h-1zM496 150h1v3h-1zM497 149h1v4h-1zM498 149h1v5h-1zM499 149h1v6h-1zM500 150h1v5h-1zM501 150h1v5h-1zM502 149h1v6h-1zM503 149h1v6h-1zM504 149h1v8h-1zM505 148h1v9h-1zM506 149h1v4h-1zM507 149h1v4h-1zM508 149h1v4h-1zM509 150h1v3h-1zM510 149h1v6h-1zM511 149h1v6h-1zM512 150h1v5h-1zM513 150h1v4h-1zM514 149h1v8h-1zM515 149h1v8h-1zM516 149h1v8h-1zM517 147h1v8h-1zM518 148h1v9h-1zM519 149h1v8h-1zM520 149h1v6h-1zM521 150h1v5h-1zM522 149h1v4h-1zM523 149h1v6h-1zM524 150h1v3h-1zM525 150h1v6h-1zM526 149h1v7h-1zM527 149h1v7h-1zM528 149h1v7h-1zM529 147h1v8h-1zM530 150h1v5h-1zM531 149h1v6h-1zM532 149h1v4h-1zM533 150h1v7h-1zM534 150h1v5h-1zM535 150h1v5h-1zM536 150h1v5h-1zM537 148h1v7h-1zM538 148h1v7h-1zM539 149h1v6h-1zM540 149h1v6h-1zM541 149h1v6h-1zM542 148h1v5h-1zM543 150h1v5h-1zM544 149h1v6h-1zM545 149h1v4h-1zM546 149h1v7h-1zM547 149h1v7h-1zM548 149h1v8h-1zM549 150h1v7h-1zM550 149h1v8h-1zM551 149h1v8h-1zM552 150h1v5h-1zM553 149h1v6h-1zM554 149h1v6h-1zM555 147h1v8h-1zM556 147h1v8h-1zM557 149h1v8h-1zM558 150h1v5h-1zM559 149h1v6h-1zM560 149h1v5h-1zM561 149h1v6h-1zM562 149h1v6h-1zM563 149h1v6h-1zM564 147h1v6h-1zM565 149h1v4h-1zM566 149h1v6h-1zM567 149h1v6h-1zM568 149h1v4h-1zM569 149h1v4h-1zM570 149h1v6h-1zM571 149h1v7h-1zM572 150h1v7h-1zM573 149h1v8h-1zM574 150h1v4h-1zM575 149h1v5h-1zM576 149h1v5h-1zM577 149h1v5h-1zM578 149h1v6h-1zM579 149h1v4h-1zM580 149h1v4h-1zM581 148h1v8h-1zM582 149h1v4h-1zM583 149h1v4h-1zM584 149h1v4h-1zM585 149h1v6h-1zM586 150h1v5h-1zM587 149h1v6h-1zM588 149h1v6h-1zM589 150h1v5h-1zM590 147h1v8h-1zM591 149h1v6h-1zM592 149h1v6h-1zM593 149h1v6h-1zM594 149h1v6h-1zM595 149h1v6h-1zM596 149h1v6h-1zM597 149h1v6h-1zM598 149h1v6h-1zM599 149h1v6h-1zM600 149h1v6h-1zM601 149h1v4h-1zM602 148h1v5h-1zM603 149h1v4h-1zM604 149h1v4h-1zM605 148h1v5h-1zM606 149h1v4h-1zM607 149h1v6h-1zM608 149h1v6h-1zM609 149h1v6h-1zM610 149h1v6h-1zM611 148h1v7h-1zM612 148h1v7h-1zM613 149h1v6h-1zM614 149h1v6h-1zM615 148h1v7h-1zM616 149h1v6h-1zM617 149h1v6h-1zM618 148h1v7h-1zM619 149h1v8h-1zM620 149h1v6h-1zM621 150h1v5h-1zM622 149h1v6h-1zM623 148h1v7h-1zM624 148h1v7h-1zM625 150h1v5h-1zM626 149h1v6h-1zM627 148h1v7h-1zM628 149h1v6h-1zM629 147h1v9h-1zM630 149h1v6h-1zM631 149h1v6h-1zM632 149h1v7h-1zM633 149h1v7h-1zM634 149h1v7h-1zM635 149h1v7h-1zM636 150h1v3h-1zM637 148h1v5h-1zM638 149h1v4h-1zM639 149h1v4h-1zM640 149h1v4h-1zM641 149h1v4h-1zM642 149h1v6h-1zM643 149h1v7h-1zM644 149h1v6h-1zM645 148h1v7h-1zM646 149h1v6h-1zM647 149h1v6h-1zM648 149h1v6h-1zM649 149h1v6h-1zM650 149h1v6h-1zM651 149h1v6h-1zM652 149h1v6h-1zM653 150h1v5h-1zM654 149h1v6h-1zM655 149h1v6h-1z" fill="#00ff00"/>
<!-- plot border -->
<rect x="15" y="28" width="1" height="421" fill="#e8ece8"/>
<rect x="15" y="448" width="640" height="1" fill="#f0f0f0"/>
<rect x="15" y="28" width="641" height="1" fill="#f0f0f0"/>
<path d="M51 28h1v7h-1zM52 28h1v5h-1zM53 28h1v2h-1zM83 28h1v2h-1zM84 28h1v3h-1zM85 28h1v6h-1zM251 28h1v5h-1zM252 28h1v4h-1zM253 28h1v3h-1zM254 28h1v1h-1zM282 28h1v2h-1zM283 28h1v3h-1zM284 28h1v2h-1zM285 28h1v4h-1zM450 28h1v7h-1zM451 28h1v6h-1zM452 28h1v5h-1zM453 28h1v2h-1zM482 28h1v1h-1zM483 28h1v1h-1zM484 28h1v2h-1zM485 28h1v4h-1zM486 28h1v6h-1zM487 28h1v7h-1zM651 28h1v5h-1zM652 28h1v4h-1zM653 28h1v3h-1zM654 28h1v2h-1zM655 28h1v1h-1z" fill="#ffff00"/>
<path d="M47 28h1v6h-1zM48 28h1v5h-1zM49 28h1v2h-1zM50 28h1v1h-1zM86 28h1v1h-1zM87 28h1v2h-1zM88 28h1v4h-1zM89 28h1v5h-1zM248 28h1v5h-1zM249 28h1v3h-1zM250 28h1v2h-1zM287 28h1v1h-1zM288 28h1v3h-1zM289 28h1v5h-1zM447 28h1v6h-1zM448 28h1v5h-1zM449 28h1v3h-1zM450 28h1v2h-1zM488 28h1v2h-1zM489 28h1v4h-1zM648 28h1v5h-1zM649 28h1v3h-1zM650 28h1v2h-1z" fill="#ff1800"/>
<!-- trigger level marker -->
<path d="M643 136.5L656 129v15.5z" fill="#ffff00"/>
<!-- time label -->
<path d="M300 28h70v14l-3 3h-26.5l-5.5 7l-5.5 -7h-26.5l-3 -3z" fill="#4070ff"/>
<path d="M300 28h70v1h-70z" fill="#b8d0ff"/>
<!-- channel markers -->
<path d="M0 234h9l6 6l-6 7h-9z" fill="#ff1800"/>
<path d="M0 232h9l6.5 6.5l-6.5 7h-9z" fill="#00ff00"/>
<!-- toolbar icons -->
<rect x="115.5" y="3.5" width="22" height="20" fill="#000" stroke="#989898"/>
<rect x="140.5" y="3.5" width="22" height="20" fill="#000" stroke="#989898"/>
<rect x="165.5" y="3.5" width="22" height="20" fill="#000" stroke="#989898"/>
<g shape-rendering="auto" fill="none">
<path d="M116.8 9.2L117.3 8.4L117.8 7.5L118.3 6.8L118.8 6.2L119.3 5.8L119.8 5.7L120.3 5.8L120.8 6.2L121.3 6.8L121.8 7.5L122.3 8.4L122.8 9.2L123.3 10.0L123.8 10.6L124.3 11.1L124.8 11.3L125.3 11.2L125.8 10.9L126.3 10.4L126.8 9.7L127.3 8.9L127.8 8.0L128.3 7.2L128.8 6.5L129.3 6.0L129.8 5.7L130.3 5.7L130.8 6.0L131.3 6.4L131.8 7.1L132.3 7.9L132.8 8.7L133.3 9.5L133.8 10.3L134.3 10.8L134.8 11.2L135.3 11.3L135.8 11.1L136.3 10.7" stroke="#ffff00" stroke-width="2.4"/>
<path d="M116.8 20.6L117.3 20.1L117.8 19.4L118.3 18.6L118.8 17.6L119.3 16.8L119.8 16.0L120.3 15.3L120.8 14.9L121.3 14.8L121.8 14.9L122.3 15.3L122.8 16.0L123.3 16.8L123.8 17.7L124.3 18.6L124.8 19.4L125.3 20.1L125.8 20.6L126.3 20.8L126.8 20.7L127.3 20.4L127.8 19.8L128.3 19.1L128.8 18.2L129.3 17.3L129.8 16.4L130.3 15.7L130.8 15.1L131.3 14.8L131.8 14.8L132.3 15.1L132.8 15.6L133.3 16.3L133.8 17.1L134.3 18.0L134.8 18.9L135.3 19.7L135.8 20.3L136.3 20.7" stroke="#00ffff" stroke-width="2.4"/>
<path d="M144.5 20.5L158.5 5.5" stroke="#00ff00" stroke-width="2.2"/>
<g filter="url(#bl)" opacity="0.9">
<path d="M168.5 21.5V14.5L173 13L174 7.5L177 5.5H181L184 8V13L181.5 15L180.5 20L178.5 21.5Z" fill="#8c8c8c"/>
<path d="M170.5 21V15M173.5 21V13M176 21V7M178.5 18V6.5M181 13V7" stroke="#c0c0c0" stroke-width="1.2"/>
</g>
<path d="M190.5 24v-17a5 5 0 0 1 5-5h37" stroke="#383838" stroke-width="1"/>
</g>
<!-- pulse icon -->
<g fill="#c8ffff">
<path d="M241 20h4v2h-4zM245 6h2v16h-2zM246 4h10v2h-10zM254 6h2v17h-2zM256 19h6v2h-6z"/>
<path d="M248 3h1v6h-1zM250 3h1v6h-1zM252 3h1v6h-1zM241 19h1v5h-1zM243 17h1v7h-1zM258 17h1v7h-1zM260 17h1v7h-1zM262 18h1v4h-1z"/>
</g>
<!-- a box -->
<rect x="265.5" y="3.5" width="21" height="20" fill="#535552" stroke="#a8a0a8"/>
<!-- key icon -->
<g fill="#3c413c">
<path d="M290 13h1v-1h15v4h-15v-1h-1zM293 16h2v3h-2zM297 16h2v4h-2zM301 16h2v3h-2z"/>
<path d="M308 9h3l2 3v6l-2 3h-3l-2.5 -3v-6zM308 12v5.5h2v-5.5z" fill-rule="evenodd" shape-rendering="auto"/>
</g>
<!-- floppy icon -->
<g fill="none" stroke-width="1">
<path d="M315.5 3.5H335.5V22.5H318.5L315.5 19.5Z" stroke="#6858e0"/>
<path d="M316.5 4.5H334.5V21.5H319L316.5 19Z" stroke="#c8fff8"/>
<path d="M320.5 4V12.5H331.5V4" stroke="#d0d8ff"/>
<path d="M321.5 4V11.5" stroke="#2818b8"/>
<path d="M322 11.5H331" stroke="#7868e0"/>
<path d="M321.5 22V15.5H331.5V22" stroke="#c8fff8"/>
<path d="M326 16h5v6h-5z" fill="#c8fff8" stroke="none"/>
<path d="M323 17h2v4h-2z" fill="#2010a0" stroke="none"/>
</g>
<!-- printer icon -->
<g fill="#3f443f" fill-rule="evenodd">
<path d="M345 3h13v10h-13zM347 5v8h9v-8z"/>
<path d="M348 6h7v1h-7zM348 8h7v2h-7zM348 11h7v1h-7z"/>
<path d="M342 13h19v1h1v9h-1v1h-19v-1h-1v-9h1zM343 15v7h17v-7z"/>
<path d="M344 17h15v3h-15z"/>
</g>
<rect x="366" y="1" width="1" height="27" fill="#080808"/>
<!-- memory bar -->
<rect x="393.5" y="3.5" width="113" height="21" fill="#080808" stroke="#6060a8"/>
<rect x="405.1" y="4.1" width="88.8" height="18.8" fill="#000" stroke="#ff6000" stroke-width="2.2" shape-rendering="auto"/>
<g shape-rendering="auto" fill="none">
<path d="M395.5 13.5L396.0 9.0L396.5 7.3L397.0 9.4L397.5 14.0L398.0 18.3L398.5 19.7L399.0 17.2L399.5 12.5L400.0 8.4L400.5 7.4L401.0 10.2L401.5 15.0L402.0 18.9L402.5 19.5L403.0 16.4" stroke="#085858" stroke-width="1"/>
<path d="M497.0 13.5L497.5 9.0L498.0 7.3L498.5 9.4L499.0 14.0L499.5 18.3L500.0 19.7L500.5 17.2L501.0 12.5L501.5 8.4L502.0 7.4L502.5 10.2L503.0 15.0L503.5 18.9L504.0 19.5L504.5 16.4L505.0 11.5L505.5 7.9" stroke="#085858" stroke-width="1"/>
<path d="M408.0 19.7L408.5 20.3L409.0 19.8L409.5 18.2L410.0 15.8L410.5 13.1L411.0 10.4L411.5 8.2L412.0 7.0L412.5 6.8L413.0 7.7L413.5 9.6L414.0 12.2L414.5 15.0L415.0 17.5L415.5 19.4L416.0 20.3L416.5 20.0L417.0 18.7L417.5 16.5L418.0 13.8L418.5 11.0L419.0 8.7L419.5 7.2L420.0 6.7L420.5 7.4L421.0 9.1L421.5 11.5L422.0 14.3L422.5 16.9L423.0 19.0L423.5 20.1L424.0 20.2L424.5 19.1L425.0 17.0L425.5 14.4L426.0 11.6L426.5 9.2L427.0 7.4L427.5 6.7L428.0 7.1L428.5 8.6L429.0 10.9L429.5 13.6L430.0 16.3L430.5 18.6L431.0 20.0L431.5 20.3L432.0 19.4L432.5 17.6L433.0 15.1L433.5 12.3L434.0 9.7L434.5 7.8L435.0 6.8L435.5 6.9L436.0 8.2L436.5 10.3L437.0 13.0L437.5 15.7L438.0 18.1L438.5 19.7L439.0 20.3L439.5 19.7L440.0 18.1L440.5 15.7L441.0 13.0L441.5 10.3L442.0 8.2L442.5 6.9L443.0 6.8L443.5 7.8L444.0 9.7L444.5 12.3L445.0 15.1L445.5 17.6L446.0 19.4L446.5 20.3L447.0 20.0L447.5 18.6L448.0 16.4L448.5 13.6L449.0 10.9L449.5 8.6L450.0 7.1L450.5 6.7L451.0 7.4L451.5 9.2L452.0 11.6L452.5 14.4L453.0 17.0L453.5 19.1L454.0 20.2L454.5 20.1L455.0 19.0L455.5 17.0L456.0 14.3L456.5 11.5L457.0 9.1L457.5 7.4L458.0 6.7L458.5 7.2L459.0 8.7L459.5 11.0L460.0 13.7L460.5 16.5L461.0 18.7L461.5 20.0L462.0 20.3L462.5 19.4L463.0 17.5L463.5 15.0L464.0 12.2L464.5 9.6L465.0 7.7L465.5 6.8L466.0 6.9L466.5 8.2L467.0 10.4L467.5 13.1L468.0 15.8L468.5 18.2L469.0 19.8L469.5 20.3L470.0 19.7L470.5 18.0L471.0 15.6L471.5 12.9L472.0 10.2L472.5 8.1L473.0 6.9L473.5 6.8L474.0 7.8L474.5 9.8L475.0 12.4L475.5 15.2L476.0 17.7L476.5 19.5L477.0 20.3L477.5 19.9L478.0 18.5L478.5 16.3L479.0 13.5L479.5 10.8L480.0 8.5L480.5 7.1L481.0 6.7L481.5 7.5L482.0 9.3L482.5 11.8L483.0 14.5L483.5 17.1L484.0 19.1L484.5 20.2L485.0 20.1L485.5 18.9L486.0 16.9L486.5 14.2L487.0 11.4L487.5 9.0L488.0 7.3L488.5 6.7L489.0 7.2L489.5 8.8L490.0 11.1L490.5 13.9L491.0 16.6L491.5 18.7" stroke="#0a5050" stroke-width="1.6" stroke-linejoin="round" transform="translate(1.6,0)"/>
<path d="M408.0 19.7L408.5 20.3L409.0 19.8L409.5 18.2L410.0 15.8L410.5 13.1L411.0 10.4L411.5 8.2L412.0 7.0L412.5 6.8L413.0 7.7L413.5 9.6L414.0 12.2L414.5 15.0L415.0 17.5L415.5 19.4L416.0 20.3L416.5 20.0L417.0 18.7L417.5 16.5L418.0 13.8L418.5 11.0L419.0 8.7L419.5 7.2L420.0 6.7L420.5 7.4L421.0 9.1L421.5 11.5L422.0 14.3L422.5 16.9L423.0 19.0L423.5 20.1L424.0 20.2L424.5 19.1L425.0 17.0L425.5 14.4L426.0 11.6L426.5 9.2L427.0 7.4L427.5 6.7L428.0 7.1L428.5 8.6L429.0 10.9L429.5 13.6L430.0 16.3L430.5 18.6L431.0 20.0L431.5 20.3L432.0 19.4L432.5 17.6L433.0 15.1L433.5 12.3L434.0 9.7L434.5 7.8L435.0 6.8L435.5 6.9L436.0 8.2L436.5 10.3L437.0 13.0L437.5 15.7L438.0 18.1L438.5 19.7L439.0 20.3L439.5 19.7L440.0 18.1L440.5 15.7L441.0 13.0L441.5 10.3L442.0 8.2L442.5 6.9L443.0 6.8L443.5 7.8L444.0 9.7L444.5 12.3L445.0 15.1L445.5 17.6L446.0 19.4L446.5 20.3L447.0 20.0L447.5 18.6L448.0 16.4L448.5 13.6L449.0 10.9L449.5 8.6L450.0 7.1L450.5 6.7L451.0 7.4L451.5 9.2L452.0 11.6L452.5 14.4L453.0 17.0L453.5 19.1L454.0 20.2L454.5 20.1L455.0 19.0L455.5 17.0L456.0 14.3L456.5 11.5L457.0 9.1L457.5 7.4L458.0 6.7L458.5 7.2L459.0 8.7L459.5 11.0L460.0 13.7L460.5 16.5L461.0 18.7L461.5 20.0L462.0 20.3L462.5 19.4L463.0 17.5L463.5 15.0L464.0 12.2L464.5 9.6L465.0 7.7L465.5 6.8L466.0 6.9L466.5 8.2L467.0 10.4L467.5 13.1L468.0 15.8L468.5 18.2L469.0 19.8L469.5 20.3L470.0 19.7L470.5 18.0L471.0 15.6L471.5 12.9L472.0 10.2L472.5 8.1L473.0 6.9L473.5 6.8L474.0 7.8L474.5 9.8L475.0 12.4L475.5 15.2L476.0 17.7L476.5 19.5L477.0 20.3L477.5 19.9L478.0 18.5L478.5 16.3L479.0 13.5L479.5 10.8L480.0 8.5L480.5 7.1L481.0 6.7L481.5 7.5L482.0 9.3L482.5 11.8L483.0 14.5L483.5 17.1L484.0 19.1L484.5 20.2L485.0 20.1L485.5 18.9L486.0 16.9L486.5 14.2L487.0 11.4L487.5 9.0L488.0 7.3L488.5 6.7L489.0 7.2L489.5 8.8L490.0 11.1L490.5 13.9L491.0 16.6L491.5 18.7" stroke="#00f0ff" stroke-width="2.3" stroke-linejoin="round"/>
</g>
<!-- W box -->
<rect x="521.5" y="3.5" width="21" height="21" fill="#000" stroke="#a8a0a8"/>
<!-- timebase pill -->
<rect x="547" y="3" width="99" height="21" rx="9" fill="#000" shape-rendering="auto"/>
<!-- close box -->
<rect x="777" y="3" width="23" height="21" fill="#ff3010"/>
<path d="M782.5 7L794.5 20M794.5 7L782.5 20" stroke="#fff" stroke-width="2.8" shape-rendering="auto"/>
<!-- falling edge symbol -->
<path d="M452.5 456.5h7l6.5 16h5" stroke="#60c0ff" stroke-width="2" fill="none" shape-rendering="auto"/>
</svg>

<!-- Text -->
<div class="t" id="logo" style="left:14.5px;top:5px;font-size:19.5px;font-weight:bold;color:#ffff00;transform-origin:0 0;transform:scaleX(1.23);">Hantek</div>
<div class="t" id="la" style="left:270.5px;top:4px;font-size:18px;font-weight:bold;color:#ff90d0;">a</div>
<div class="t" id="lw" style="left:522.5px;top:4.5px;font-size:19.5px;font-weight:bold;color:#c8ffff;">W</div>
<div class="t" id="ltb" style="left:569px;top:7px;font-size:17.5px;color:#fff;letter-spacing:-0.45px;-webkit-text-stroke:0.4px #000;">20.0ms</div>
<div class="t" id="ltime" style="left:312px;top:28.5px;font-size:16.5px;color:#fff;letter-spacing:-0.55px;-webkit-text-stroke:0.3px #4070ff;">0.000s</div>
<div class="t" id="lutil" style="left:679px;top:4.5px;font-size:19.5px;color:#fff;letter-spacing:0.5px;-webkit-text-stroke:0.12px #404440;">UTILITY</div>
<div class="t" id="l4" style="left:2px;top:232px;font-size:13px;font-weight:bold;color:#3040ff;">4</div>

<div class="btn" style="top:64px;"></div>
<div class="btn" style="top:145px;"></div>
<div class="btn" style="top:221px;"></div>
<div class="btn" style="top:305px;"></div>
<div class="btn" style="left:678px;top:448px;width:98px;height:23px;border-color:#f0f0f0 #383838 #383838 #f0f0f0;border-radius:6px;"></div>
<div class="bt" id="b1" style="top:69px;">System<br><span style="letter-spacing:0.7px">Status</span></div>
<div class="bt" id="b2" style="top:150px;">Update<br>Firmware</div>
<div class="bt" id="b3" style="top:226px;">Save<br>Waveform</div>
<div class="bt" id="b4" style="top:318px;letter-spacing:0.4px;">Do Self Cal</div>
<div class="bt" id="b5" style="top:452px;letter-spacing:0.4px;">Page 1/4</div>

<div class="pill" style="left:48px;width:61px;"></div>
<div class="pill" style="left:148px;width:61px;"></div>
<div class="pill" style="left:248px;width:61px;"></div>
<div class="pill" style="left:348px;width:61px;"></div>
<div class="pill" style="left:473px;width:69px;"></div>
<div class="pill" style="left:550px;width:100px;"></div>
<div class="t ch" id="c1" style="left:16px;top:457px;font-size:16px;color:#ffff00;letter-spacing:-1.3px;">CH1</div>
<div class="t ch" id="c2" style="left:116px;top:457px;font-size:16px;color:#00ffff;letter-spacing:-0.6px;">CH2</div>
<div class="t ch" id="c3" style="left:216px;top:457px;font-size:16px;color:#ff1800;letter-spacing:-0.6px;">CH3</div>
<div class="t ch" id="c4" style="left:316px;top:457px;font-size:16px;color:#00ff00;letter-spacing:-0.6px;">CH4</div>
<div class="t ch" id="c5" style="left:419px;top:457px;font-size:16px;color:#ffff00;letter-spacing:-1.3px;">CH1</div>
<div class="t pv" id="v1" style="left:60px;top:459.5px;font-size:16px;color:#ffff00;letter-spacing:-0.8px;">1.00V</div>
<div class="t pv" id="v2" style="left:160px;top:459.5px;font-size:16px;color:#00ffff;letter-spacing:-0.8px;">1.00V</div>
<div class="t pv" id="v3" style="left:260px;top:459.5px;font-size:16px;color:#ff1800;letter-spacing:-0.8px;">1.00V</div>
<div class="t pv" id="v4" style="left:360px;top:459.5px;font-size:16px;color:#00ff00;letter-spacing:-0.8px;">1.00V</div>
<div class="t pv" id="v5" style="left:487px;top:457.5px;font-size:16px;color:#ffff00;letter-spacing:-0.2px;">2.04V</div>
<div class="t pv" id="v6" style="left:563px;top:457.5px;font-size:16px;color:#ffff00;letter-spacing:-0.3px;">10.0000Hz</div>
</body></html>
